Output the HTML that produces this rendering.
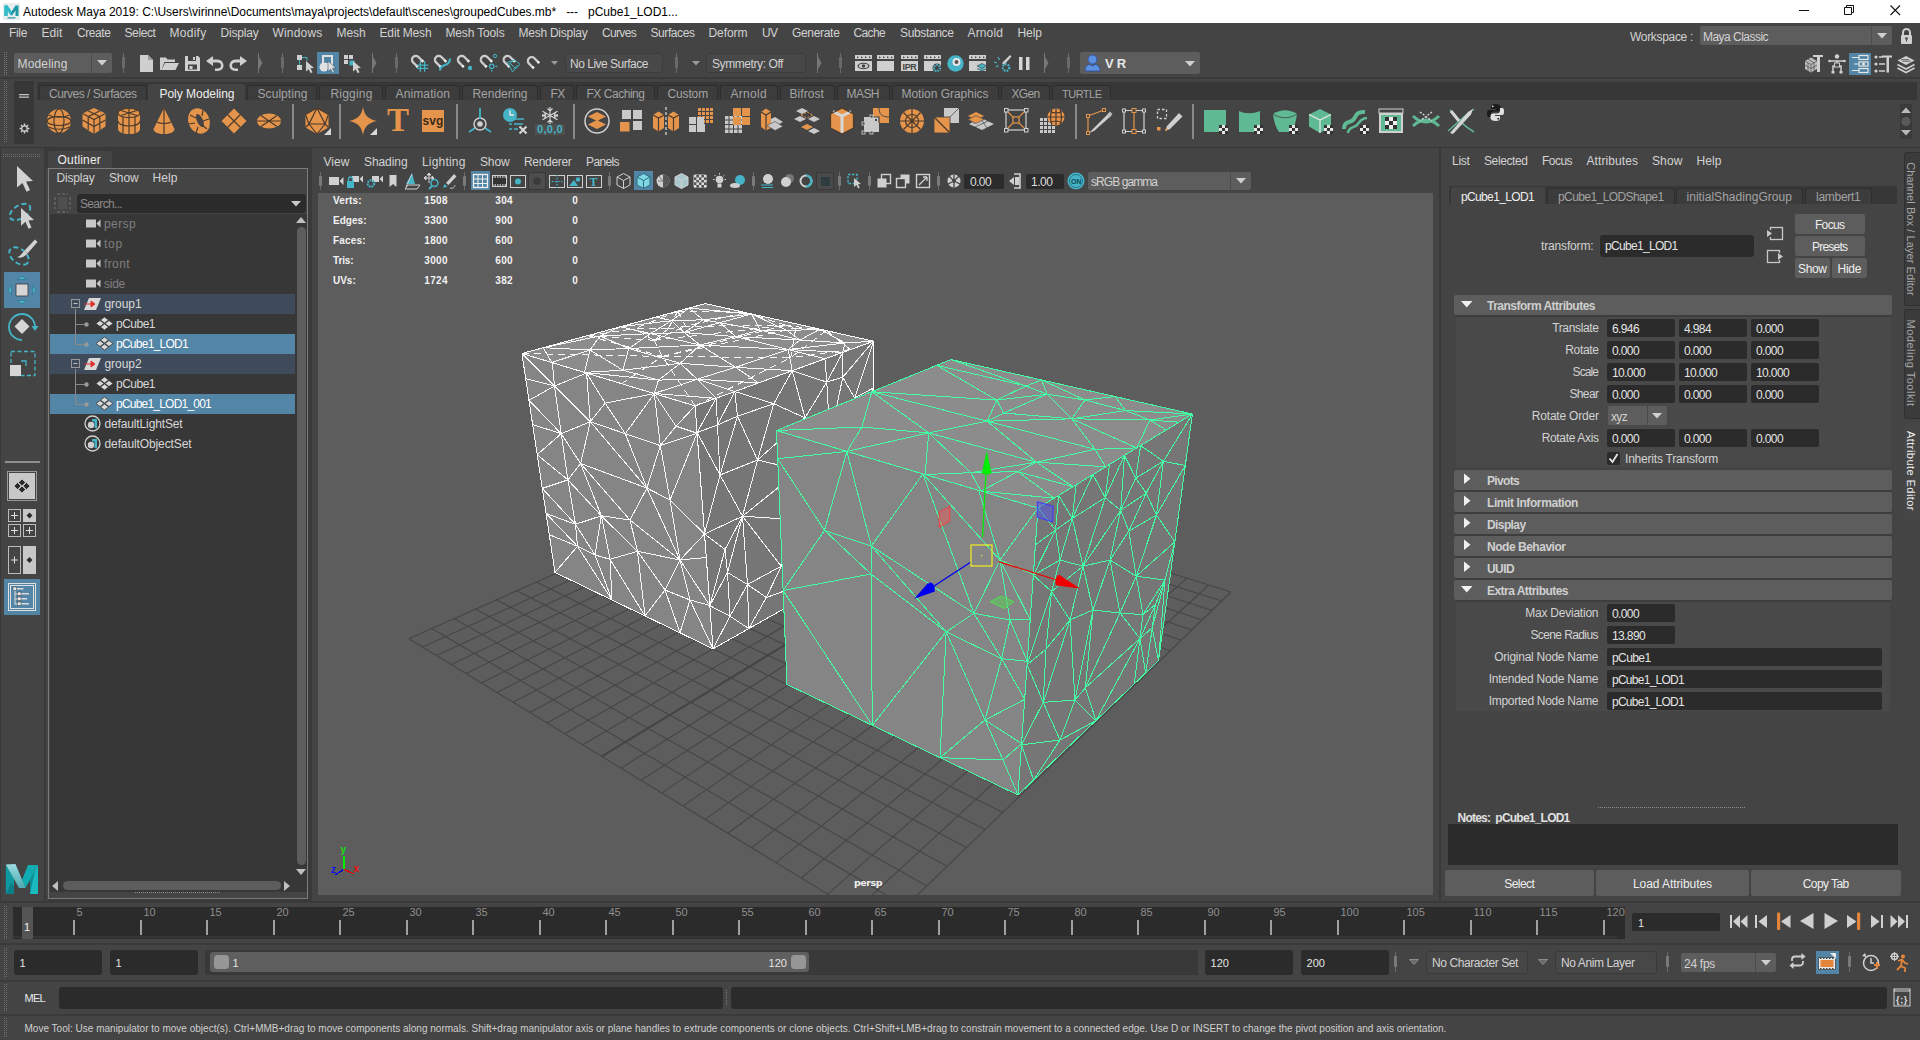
<!DOCTYPE html>
<html><head><meta charset="utf-8"><title>Autodesk Maya 2019</title>
<style>
html,body{margin:0;padding:0;}
body{width:1920px;height:1040px;overflow:hidden;background:#444444;position:relative;font-family:"Liberation Sans", sans-serif;font-size:12px;}
div,span,svg{position:absolute;box-sizing:border-box;}
svg{overflow:visible;}
</style></head><body>
<div style="left:0px;top:0px;width:1920px;height:23px;background:#ffffff;"></div>
<svg style="left:3px;top:3px;" width="17" height="17" viewBox="0 0 17 17"><rect x="0" y="0" width="17" height="17" fill="#e6eef0"/>
<path d="M1.5 13V2.5h3l4 6.2 4-6.2h3V13h-3V7.6l-3.2 4.6h-1.6L4.5 7.6V13z" fill="#1f98a4"/>
<path d="M1.5 13V2.5h3l4 6.2v3.5h-.8L4.5 7.6V13z" fill="#2fbccb"/>
<rect x="4.5" y="14" width="8" height="1.6" fill="#5fa9b3"/></svg>
<span style="top:4.00px;font-size:12px;line-height:16px;color:#000000;white-space:pre;letter-spacing:-0.012px;left:23px;">Autodesk Maya 2019: C:\Users\virinne\Documents\maya\projects\default\scenes\groupedCubes.mb*   ---   pCube1_LOD1...</span>
<svg style="left:1795px;top:0px;" width="120" height="23" viewBox="0 0 120 23"><path d="M4 10.5h10" stroke="#111" stroke-width="1" fill="none"/>
<path d="M49.5 7.5h7v7h-7z M51.5 7.5v-2h7v7h-2" stroke="#111" stroke-width="1" fill="none"/>
<path d="M95.5 5.5l9.5 9.5M105 5.5l-9.5 9.5" stroke="#111" stroke-width="1.1" fill="none"/></svg>
<div style="left:0px;top:23px;width:1920px;height:24px;background:#444444;"></div>
<span style="top:25.00px;font-size:12px;line-height:16px;color:#d2d2d2;white-space:pre;letter-spacing:-0.336px;left:9.0px;">File</span>
<span style="top:25.00px;font-size:12px;line-height:16px;color:#d2d2d2;white-space:pre;letter-spacing:0.078px;left:41.5px;">Edit</span>
<span style="top:25.00px;font-size:12px;line-height:16px;color:#d2d2d2;white-space:pre;letter-spacing:-0.422px;left:77.0px;">Create</span>
<span style="top:25.00px;font-size:12px;line-height:16px;color:#d2d2d2;white-space:pre;letter-spacing:-0.393px;left:124.5px;">Select</span>
<span style="top:25.00px;font-size:12px;line-height:16px;color:#d2d2d2;white-space:pre;letter-spacing:0.276px;left:169.5px;">Modify</span>
<span style="top:25.00px;font-size:12px;line-height:16px;color:#d2d2d2;white-space:pre;letter-spacing:-0.194px;left:220.5px;">Display</span>
<span style="top:25.00px;font-size:12px;line-height:16px;color:#d2d2d2;white-space:pre;letter-spacing:0.188px;left:272.5px;">Windows</span>
<span style="top:25.00px;font-size:12px;line-height:16px;color:#d2d2d2;white-space:pre;letter-spacing:-0.086px;left:336.5px;">Mesh</span>
<span style="top:25.00px;font-size:12px;line-height:16px;color:#d2d2d2;white-space:pre;letter-spacing:-0.151px;left:379.5px;">Edit Mesh</span>
<span style="top:25.00px;font-size:12px;line-height:16px;color:#d2d2d2;white-space:pre;letter-spacing:-0.148px;left:445.5px;">Mesh Tools</span>
<span style="top:25.00px;font-size:12px;line-height:16px;color:#d2d2d2;white-space:pre;letter-spacing:-0.253px;left:518.5px;">Mesh Display</span>
<span style="top:25.00px;font-size:12px;line-height:16px;color:#d2d2d2;white-space:pre;letter-spacing:-0.669px;left:602.0px;">Curves</span>
<span style="top:25.00px;font-size:12px;line-height:16px;color:#d2d2d2;white-space:pre;letter-spacing:-0.420px;left:650.5px;">Surfaces</span>
<span style="top:25.00px;font-size:12px;line-height:16px;color:#d2d2d2;white-space:pre;letter-spacing:-0.057px;left:708.5px;">Deform</span>
<span style="top:25.00px;font-size:12px;line-height:16px;color:#d2d2d2;white-space:pre;letter-spacing:-0.586px;left:762.0px;">UV</span>
<span style="top:25.00px;font-size:12px;line-height:16px;color:#d2d2d2;white-space:pre;letter-spacing:-0.318px;left:792.0px;">Generate</span>
<span style="top:25.00px;font-size:12px;line-height:16px;color:#d2d2d2;white-space:pre;letter-spacing:-0.637px;left:853.5px;">Cache</span>
<span style="top:25.00px;font-size:12px;line-height:16px;color:#d2d2d2;white-space:pre;letter-spacing:-0.358px;left:900.0px;">Substance</span>
<span style="top:25.00px;font-size:12px;line-height:16px;color:#d2d2d2;white-space:pre;letter-spacing:0.135px;left:967.5px;">Arnold</span>
<span style="top:25.00px;font-size:12px;line-height:16px;color:#d2d2d2;white-space:pre;letter-spacing:-0.047px;left:1017.5px;">Help</span>
<span style="top:29.00px;font-size:12px;line-height:16px;color:#d2d2d2;white-space:pre;letter-spacing:-0.315px;left:1630px;">Workspace :</span>
<div style="left:1700px;top:26px;width:192px;height:19px;background:#5d5d5d;border-radius:2px;"></div>
<div style="left:1871px;top:26px;width:1px;height:19px;background:#4f4f4f;"></div>
<span style="top:29.00px;font-size:12px;line-height:16px;color:#d2d2d2;white-space:pre;letter-spacing:-0.530px;left:1703px;">Maya Classic</span>
<svg style="left:1877px;top:33px;" width="10" height="6" viewBox="0 0 10 6"><path d="M0 0h10l-5 5.5z" fill="#d0d0d0"/></svg>
<svg style="left:1900px;top:28px;" width="13" height="17" viewBox="0 0 13 17"><path d="M3 7V4.5a3.5 3.5 0 0 1 7 0V7" stroke="#cfcfcf" stroke-width="2" fill="none"/><rect x="1" y="7" width="11" height="9" rx="1" fill="#cfcfcf"/><circle cx="6.5" cy="10.5" r="1.3" fill="#444"/><rect x="6" y="10.5" width="1" height="3" fill="#444"/></svg>
<div style="left:0px;top:47px;width:1920px;height:31px;background:#444444;"></div>
<div style="left:0px;top:77px;width:1920px;height:2px;background:#3a3a3a;"></div>
<svg style="left:4px;top:52px;" width="4" height="24" viewBox="0 0 4 24"><rect x="0" y="0" width="1" height="1" fill="#7a7a7a"/><rect x="0" y="2" width="1" height="1" fill="#7a7a7a"/><rect x="0" y="4" width="1" height="1" fill="#7a7a7a"/><rect x="0" y="6" width="1" height="1" fill="#7a7a7a"/><rect x="0" y="8" width="1" height="1" fill="#7a7a7a"/><rect x="0" y="10" width="1" height="1" fill="#7a7a7a"/><rect x="0" y="12" width="1" height="1" fill="#7a7a7a"/><rect x="0" y="14" width="1" height="1" fill="#7a7a7a"/><rect x="0" y="16" width="1" height="1" fill="#7a7a7a"/><rect x="0" y="18" width="1" height="1" fill="#7a7a7a"/><rect x="0" y="20" width="1" height="1" fill="#7a7a7a"/><rect x="0" y="22" width="1" height="1" fill="#7a7a7a"/><rect x="2" y="0" width="1" height="1" fill="#7a7a7a"/><rect x="2" y="2" width="1" height="1" fill="#7a7a7a"/><rect x="2" y="4" width="1" height="1" fill="#7a7a7a"/><rect x="2" y="6" width="1" height="1" fill="#7a7a7a"/><rect x="2" y="8" width="1" height="1" fill="#7a7a7a"/><rect x="2" y="10" width="1" height="1" fill="#7a7a7a"/><rect x="2" y="12" width="1" height="1" fill="#7a7a7a"/><rect x="2" y="14" width="1" height="1" fill="#7a7a7a"/><rect x="2" y="16" width="1" height="1" fill="#7a7a7a"/><rect x="2" y="18" width="1" height="1" fill="#7a7a7a"/><rect x="2" y="20" width="1" height="1" fill="#7a7a7a"/><rect x="2" y="22" width="1" height="1" fill="#7a7a7a"/></svg>
<div style="left:14px;top:53px;width:98px;height:20px;background:#5d5d5d;border-radius:2px;"></div>
<div style="left:91px;top:53px;width:1px;height:20px;background:#4c4c4c;"></div>
<span style="top:56.00px;font-size:12px;line-height:16px;color:#d2d2d2;white-space:pre;letter-spacing:0.162px;left:17.5px;">Modeling</span>
<svg style="left:97px;top:60px;" width="10" height="6" viewBox="0 0 10 6"><path d="M0 0h10l-5 5.5z" fill="#d0d0d0"/></svg>
<svg style="left:121px;top:53px;" width="5" height="20" viewBox="0 0 5 20"><rect x="2" y="0" width="1" height="20" fill="#6a6a6a"/><rect x="1" y="4" width="3" height="11" rx="1" fill="#6a6a6a"/></svg>
<svg style="left:139px;top:55px;" width="15" height="17" viewBox="0 0 15 17"><path d="M1 0h8l5 5v12H1z" fill="#cfcfcf"/><path d="M9 0v5h5" fill="#9a9a9a"/></svg>
<svg style="left:160px;top:56px;" width="19" height="15" viewBox="0 0 19 15"><path d="M0 14V1.5h6l1.5 2H15V6H4.5L1.5 14z" fill="#cfcfcf"/><path d="M5 7h14l-3.5 7H1.5z" fill="#cfcfcf"/></svg>
<svg style="left:185px;top:56px;" width="15" height="15" viewBox="0 0 15 15"><path d="M0 0h13l2 2v13H0z" fill="#cfcfcf"/><rect x="3" y="0" width="8" height="5" fill="#444"/><rect x="8" y="1" width="2" height="3" fill="#cfcfcf"/><rect x="3" y="8.5" width="9" height="5" fill="#444"/><rect x="4.5" y="10" width="3" height="3" fill="#cfcfcf"/></svg>
<svg style="left:206px;top:56px;" width="18" height="15" viewBox="0 0 18 15"><path d="M7 0L0 5l7 5V6.6h4.5c2 0 3.5 1 3.5 3s-1.5 3-3.5 3H9v2.4h2.5c3.5 0 6-2 6-5.4S15 3.400 11.5 3.400H7z" fill="#cfcfcf"/></svg>
<svg style="left:229px;top:56px;" width="18" height="15" viewBox="0 0 18 15"><g transform="translate(18,0) scale(-1,1)"><path d="M7 0L0 5l7 5V6.6h4.5c2 0 3.5 1 3.5 3s-1.5 3-3.5 3H9v2.4h2.5c3.500 0 6-2 6-5.400S15 3.400 11.5 3.400H7z" fill="#cfcfcf"/></g></svg>
<svg style="left:258px;top:53px;" width="5" height="20" viewBox="0 0 5 20"><path d="M0.5 0v20M0.5 4l3.5 6-3.5 6z" stroke="#777" stroke-width="1" fill="#777"/></svg>
<svg style="left:280px;top:53px;" width="5" height="20" viewBox="0 0 5 20"><rect x="2" y="0" width="1" height="20" fill="#6a6a6a"/><rect x="1" y="4" width="3" height="11" rx="1" fill="#6a6a6a"/></svg>
<svg style="left:296px;top:54px;" width="20" height="20" viewBox="0 0 20 20"><rect x="1" y="1" width="5" height="5" fill="#cfcfcf"/><rect x="1" y="11" width="5" height="5" fill="#cfcfcf"/><path d="M3.500 6v5M6 3.500h5v3" stroke="#45b4c7" stroke-width="1" fill="none"/><path d="M10 7l8 7-3.500.3 2 4-1.800.9-2-4L10 17.500z" fill="#cfcfcf"/></svg>
<div style="left:317px;top:52px;width:22px;height:22px;background:#5285a6;"></div>
<svg style="left:318px;top:54px;" width="20" height="20" viewBox="0 0 20 20"><circle cx="6" cy="13" r="4.500" fill="#e0e0e0"/><rect x="5" y="2" width="9" height="8" fill="none" stroke="#e0e0e0" stroke-width="2"/><path d="M10 7l8 7-3.500.3 2 4-1.800.9-2-4L10 17.500z" fill="#e0e0e0" stroke="#3a5a70" stroke-width=".6"/></svg>
<svg style="left:343px;top:54px;" width="20" height="20" viewBox="0 0 20 20"><rect x="1" y="1" width="4" height="4" fill="#cfcfcf"/><rect x="6" y="1" width="4" height="4" fill="#cfcfcf"/><rect x="1" y="6" width="4" height="4" fill="#cfcfcf"/><rect x="6.500" y="6.500" width="5" height="5" fill="#45b4c7"/><path d="M10 7l8 7-3.500.3 2 4-1.800.9-2-4L10 17.500z" fill="#cfcfcf"/></svg>
<svg style="left:372px;top:53px;" width="5" height="20" viewBox="0 0 5 20"><path d="M0.5 0v20M0.5 4l3.5 6-3.5 6z" stroke="#777" stroke-width="1" fill="#777"/></svg>
<svg style="left:394px;top:53px;" width="5" height="20" viewBox="0 0 5 20"><rect x="2" y="0" width="1" height="20" fill="#6a6a6a"/><rect x="1" y="4" width="3" height="11" rx="1" fill="#6a6a6a"/></svg>
<svg style="left:0;top:0;" width="600" height="80" viewBox="0 0 600 80"><g transform="translate(415.8 59.7) rotate(-45)"><path d="M-3.8 5.8V0A3.8 3.8 0 0 1 3.8 0V5.8" fill="none" stroke="#cdcdcd" stroke-width="2.300"/><rect x="-5.05" y="4.8" width="2.500" height="2" fill="#f4f4f4"/><rect x="2.55" y="4.8" width="2.500" height="2" fill="#f4f4f4"/></g><path d="M420.400 61v10.800M424.600 61v10.800M417 65.100h11.300M417 68.400h11.300" stroke="#45b4c7" stroke-width="1.300" fill="none"/><g transform="translate(438.75 59.7) rotate(-45)"><path d="M-3.8 5.8V0A3.8 3.8 0 0 1 3.8 0V5.8" fill="none" stroke="#cdcdcd" stroke-width="2.300"/><rect x="-5.05" y="4.8" width="2.500" height="2" fill="#f4f4f4"/><rect x="2.55" y="4.8" width="2.500" height="2" fill="#f4f4f4"/></g><path d="M450 58.500c0 4-1.500 5.500-5 6.500s-5 3-5 5.500" stroke="#45b4c7" stroke-width="2.200" fill="none"/><g transform="translate(461.7 59.7) rotate(-45)"><path d="M-3.8 5.8V0A3.8 3.8 0 0 1 3.8 0V5.8" fill="none" stroke="#cdcdcd" stroke-width="2.300"/><rect x="-5.05" y="4.8" width="2.500" height="2" fill="#f4f4f4"/><rect x="2.55" y="4.8" width="2.500" height="2" fill="#f4f4f4"/></g><circle cx="470" cy="68" r="2.200" fill="#45b4c7"/><g transform="translate(484.6 59.7) rotate(-45)"><path d="M-3.8 5.8V0A3.8 3.8 0 0 1 3.8 0V5.8" fill="none" stroke="#cdcdcd" stroke-width="2.300"/><rect x="-5.05" y="4.8" width="2.500" height="2" fill="#f4f4f4"/><rect x="2.55" y="4.8" width="2.500" height="2" fill="#f4f4f4"/></g><circle cx="491.700" cy="66.300" r="2.200" fill="none" stroke="#45b4c7" stroke-width="1.200"/><circle cx="495" cy="56" r="1.600" fill="none" stroke="#45b4c7" stroke-width="1"/><path d="M495.300 66.300h2M491.700 69.800v2" stroke="#45b4c7" stroke-width="1.200"/><g transform="translate(507.5 59.7) rotate(-45)"><path d="M-3.8 5.8V0A3.8 3.8 0 0 1 3.8 0V5.8" fill="none" stroke="#cdcdcd" stroke-width="2.300"/><rect x="-5.05" y="4.8" width="2.500" height="2" fill="#f4f4f4"/><rect x="2.55" y="4.8" width="2.500" height="2" fill="#f4f4f4"/></g><path d="M507.500 62.200l7.500-2.100 5 4.200-7.500 7.500z" fill="none" stroke="#45b4c7" stroke-width="1"/><path d="M510 63l5.500 5.500M513 60.500l-4 4M517.500 65l-4 4" stroke="#45b4c7" stroke-width="1"/><g transform="translate(531.7 60.9) rotate(-45)"><path d="M-3.8 5.8V0A3.8 3.8 0 0 1 3.8 0V5.8" fill="none" stroke="#cdcdcd" stroke-width="2.300"/><rect x="-5.05" y="4.8" width="2.500" height="2" fill="#f4f4f4"/><rect x="2.55" y="4.8" width="2.500" height="2" fill="#f4f4f4"/></g></svg>
<svg style="left:551px;top:61px;" width="8" height="5" viewBox="0 0 8 5"><path d="M0 0h7l-3.500 4z" fill="#9a9a9a"/></svg>
<div style="left:565px;top:53px;width:98px;height:20px;background:#484848;border:1px solid #3c3c3c;border-radius:3px;"></div>
<span style="top:56.00px;font-size:12px;line-height:16px;color:#d2d2d2;white-space:pre;letter-spacing:-0.493px;left:570px;">No Live Surface</span>
<svg style="left:674px;top:53px;" width="5" height="20" viewBox="0 0 5 20"><rect x="2" y="0" width="1" height="20" fill="#6a6a6a"/><rect x="1" y="4" width="3" height="11" rx="1" fill="#6a6a6a"/></svg>
<svg style="left:692px;top:61px;" width="8" height="5" viewBox="0 0 8 5"><path d="M0 0h8l-4 4.500z" fill="#9a9a9a"/></svg>
<div style="left:706px;top:53px;width:100px;height:20px;background:#484848;border:1px solid #3c3c3c;border-radius:3px;"></div>
<span style="top:56.00px;font-size:12px;line-height:16px;color:#d2d2d2;white-space:pre;letter-spacing:-0.419px;left:712px;">Symmetry: Off</span>
<svg style="left:817px;top:53px;" width="5" height="20" viewBox="0 0 5 20"><path d="M0.5 0v20M0.5 4l3.5 6-3.5 6z" stroke="#777" stroke-width="1" fill="#777"/></svg>
<svg style="left:838px;top:53px;" width="5" height="20" viewBox="0 0 5 20"><rect x="2" y="0" width="1" height="20" fill="#6a6a6a"/><rect x="1" y="4" width="3" height="11" rx="1" fill="#6a6a6a"/></svg>
<svg style="left:855px;top:55px;" width="17" height="17" viewBox="0 0 17 17"><path d="M0 0h17v4H0z" fill="#cfcfcf"/><path d="M2 1.200l2 1-2 1z" fill="#444"/><path d="M6 1.200l2 1-2 1z" fill="#444"/><path d="M10 1.200l2 1-2 1z" fill="#444"/><path d="M14 1.200l2 1-2 1z" fill="#444"/><rect x="0" y="6" width="17" height="10" fill="#cfcfcf"/><ellipse cx="8.500" cy="11" rx="6" ry="3.300" fill="#444"/><ellipse cx="8.500" cy="11" rx="4.600" ry="2.200" fill="#cfcfcf"/><circle cx="8.500" cy="11" r="1.800" fill="#444"/></svg>
<svg style="left:877px;top:55px;" width="17" height="17" viewBox="0 0 17 17"><path d="M0 0h17v4H0z" fill="#cfcfcf"/><path d="M2 1.200l2 1-2 1z" fill="#444"/><path d="M6 1.200l2 1-2 1z" fill="#444"/><path d="M10 1.200l2 1-2 1z" fill="#444"/><path d="M14 1.200l2 1-2 1z" fill="#444"/><rect x="0" y="6" width="17" height="10" fill="#cfcfcf"/></svg>
<svg style="left:901px;top:55px;" width="17" height="17" viewBox="0 0 17 17"><path d="M0 0h17v4H0z" fill="#cfcfcf"/><path d="M2 1.200l2 1-2 1z" fill="#444"/><path d="M6 1.200l2 1-2 1z" fill="#444"/><path d="M10 1.200l2 1-2 1z" fill="#444"/><path d="M14 1.200l2 1-2 1z" fill="#444"/><rect x="0" y="6" width="17" height="10" fill="#cfcfcf"/></svg>
<span style="top:61.00px;font-size:9px;line-height:12px;color:#444444;white-space:pre;font-weight:bold;letter-spacing:-0.339px;left:902.5px;">IPR</span>
<svg style="left:924px;top:55px;" width="17" height="17" viewBox="0 0 17 17"><path d="M0 0h17v4H0z" fill="#cfcfcf"/><path d="M2 1.200l2 1-2 1z" fill="#444"/><path d="M6 1.200l2 1-2 1z" fill="#444"/><path d="M10 1.200l2 1-2 1z" fill="#444"/><path d="M14 1.200l2 1-2 1z" fill="#444"/><rect x="0" y="6" width="17" height="10" fill="#cfcfcf"/><circle cx="13" cy="13" r="4.500" fill="#444"/><circle cx="13" cy="13" r="3" fill="none" stroke="#45b4c7" stroke-width="2" stroke-dasharray="1.600 1"/></svg>
<svg style="left:947px;top:55px;" width="17" height="17" viewBox="0 0 17 17"><circle cx="8.500" cy="8.500" r="8.200" fill="#45b4c7"/><circle cx="9.500" cy="7" r="4" fill="#e8e8e8"/><circle cx="9.500" cy="7" r="2" fill="#555"/></svg>
<svg style="left:969px;top:55px;" width="17" height="17" viewBox="0 0 17 17"><path d="M0 0h17v4H0z" fill="#cfcfcf"/><path d="M2 1.200l2 1-2 1z" fill="#444"/><path d="M6 1.200l2 1-2 1z" fill="#444"/><path d="M10 1.200l2 1-2 1z" fill="#444"/><path d="M14 1.200l2 1-2 1z" fill="#444"/><rect x="0" y="6" width="17" height="10" fill="#cfcfcf"/><path d="M8 11l5-2.500 5 2.500-5 2.500z M8 13.500l5 2.500 5-2.500" fill="#45b4c7" stroke="#444" stroke-width=".7"/></svg>
<svg style="left:993px;top:54px;" width="19" height="19" viewBox="0 0 19 19"><path d="M9 9L17 1l1.500 1.500L11 11z" fill="#cfcfcf"/><path d="M1 8l3 1M3 13l2.500-1.500M5 3l1.500 3" stroke="#45b4c7" stroke-width="1.200"/><circle cx="13" cy="13.500" r="3.300" fill="none" stroke="#45b4c7" stroke-width="2.200" stroke-dasharray="1.800 1"/></svg>
<svg style="left:1019px;top:57px;" width="11" height="13" viewBox="0 0 11 13"><rect x="0" y="0" width="3.500" height="13" fill="#d6d6d6"/><rect x="7" y="0" width="3.500" height="13" fill="#d6d6d6"/></svg>
<svg style="left:1044px;top:53px;" width="5" height="20" viewBox="0 0 5 20"><path d="M0.5 0v20M0.5 4l3.5 6-3.5 6z" stroke="#777" stroke-width="1" fill="#777"/></svg>
<svg style="left:1066px;top:53px;" width="5" height="20" viewBox="0 0 5 20"><rect x="2" y="0" width="1" height="20" fill="#6a6a6a"/><rect x="1" y="4" width="3" height="11" rx="1" fill="#6a6a6a"/></svg>
<div style="left:1080px;top:52px;width:120px;height:22px;background:#5d5d5d;border-radius:2px;"></div>
<svg style="left:1084px;top:54px;" width="17" height="18" viewBox="0 0 17 18"><circle cx="8.500" cy="5.500" r="4.500" fill="#5b8fe0" stroke="#2c4f9c" stroke-width=".8"/><path d="M1 17c0-5 3-6.500 5-6.500l2.500 1.500L11 10.500c2 0 5 1.500 5 6.500z" fill="#5b8fe0" stroke="#2c4f9c" stroke-width=".8"/></svg>
<span style="top:55.00px;font-size:13px;line-height:17px;color:#e8e8e8;white-space:pre;font-weight:bold;letter-spacing:-0.224px;left:1105px;">V R</span>
<svg style="left:1185px;top:61px;" width="10" height="6" viewBox="0 0 10 6"><path d="M0 0h10l-5 5.500z" fill="#d0d0d0"/></svg>
<svg style="left:1804px;top:54px;" width="20" height="20" viewBox="0 0 20 20"><path d="M1 7l6-3.500 6 3.500v8l-6 3.500-6-3.500z" fill="#bdbdbd"/><path d="M1 7l6 3.500 6-3.500M7 10.500v8M4 5.200l6 3.500M4 8.800v8M10 8.800v8M1 11l6 3.500 6-3.500" stroke="#555" stroke-width=".8" fill="none"/><path d="M9 1h10v2l-3 0v15h-3V3H9z" fill="#d0d0d0"/></svg>
<svg style="left:1828px;top:54px;" width="18" height="20" viewBox="0 0 18 20"><circle cx="9" cy="2.500" r="2.200" fill="#d0d0d0"/><path d="M2 7h14M9 7v6M5 18v-6h8v6" stroke="#d0d0d0" stroke-width="1.500" fill="none"/><circle cx="1.500" cy="7" r="1.300" fill="#d0d0d0"/><circle cx="16.500" cy="7" r="1.300" fill="#d0d0d0"/><rect x="3.500" y="17" width="3" height="2.500" fill="#d0d0d0"/><rect x="11.500" y="17" width="3" height="2.500" fill="#d0d0d0"/><rect x="6.500" y="9" width="5" height="4" fill="#444" stroke="#d0d0d0"/></svg>
<div style="left:1849px;top:53px;width:22px;height:22px;background:#5285a6;"></div>
<svg style="left:1850px;top:54px;" width="20" height="20" viewBox="0 0 20 20"><rect x="9" y="1.500" width="9" height="4" fill="none" stroke="#e6e6e6" stroke-width="1.200"/><rect x="9" y="8" width="9" height="4" fill="none" stroke="#e6e6e6" stroke-width="1.200"/><rect x="9" y="14.500" width="9" height="4" fill="none" stroke="#e6e6e6" stroke-width="1.200"/><path d="M2 3.500h7M4 10h5M2 16.500h7" stroke="#e6e6e6" stroke-width="1.200"/><circle cx="13.500" cy="10" r="1.500" fill="#e6e6e6"/></svg>
<svg style="left:1874px;top:54px;" width="19" height="20" viewBox="0 0 19 20"><circle cx="2" cy="3" r="1.600" fill="#d0d0d0"/><circle cx="2" cy="10" r="1.600" fill="#d0d0d0"/><circle cx="2" cy="17" r="1.600" fill="#d0d0d0"/><path d="M5 3h4M5 10h6M5 17h6" stroke="#d0d0d0" stroke-width="1.300"/><path d="M8 1.500h10v2h-3v15h-2.500v-15H8z" fill="#d0d0d0"/></svg>
<svg style="left:1897px;top:56px;" width="18" height="18" viewBox="0 0 18 18"><path d="M9 0l8.500 4.500L9 9 .5 4.500z" fill="#d0d0d0"/><path d="M4 3.700h8M5.500 5.200h8" stroke="#444" stroke-width=".8"/><path d="M.5 8.500L9 13l8.500-4.500M.5 12L9 16.500 17.500 12" stroke="#d0d0d0" stroke-width="1.600" fill="none"/></svg>
<div style="left:0px;top:79px;width:1920px;height:68px;background:#444444;"></div>
<div style="left:0px;top:147px;width:1920px;height:2px;background:#383838;"></div>
<svg style="left:4px;top:81px;" width="4" height="62" viewBox="0 0 4 62"><rect x="0" y="0" width="1" height="1" fill="#6f6f6f"/><rect x="0" y="2" width="1" height="1" fill="#6f6f6f"/><rect x="0" y="4" width="1" height="1" fill="#6f6f6f"/><rect x="0" y="6" width="1" height="1" fill="#6f6f6f"/><rect x="0" y="8" width="1" height="1" fill="#6f6f6f"/><rect x="0" y="10" width="1" height="1" fill="#6f6f6f"/><rect x="0" y="12" width="1" height="1" fill="#6f6f6f"/><rect x="0" y="14" width="1" height="1" fill="#6f6f6f"/><rect x="0" y="16" width="1" height="1" fill="#6f6f6f"/><rect x="0" y="18" width="1" height="1" fill="#6f6f6f"/><rect x="0" y="20" width="1" height="1" fill="#6f6f6f"/><rect x="0" y="22" width="1" height="1" fill="#6f6f6f"/><rect x="0" y="24" width="1" height="1" fill="#6f6f6f"/><rect x="0" y="26" width="1" height="1" fill="#6f6f6f"/><rect x="0" y="28" width="1" height="1" fill="#6f6f6f"/><rect x="0" y="30" width="1" height="1" fill="#6f6f6f"/><rect x="0" y="32" width="1" height="1" fill="#6f6f6f"/><rect x="0" y="34" width="1" height="1" fill="#6f6f6f"/><rect x="0" y="36" width="1" height="1" fill="#6f6f6f"/><rect x="0" y="38" width="1" height="1" fill="#6f6f6f"/><rect x="0" y="40" width="1" height="1" fill="#6f6f6f"/><rect x="0" y="42" width="1" height="1" fill="#6f6f6f"/><rect x="0" y="44" width="1" height="1" fill="#6f6f6f"/><rect x="0" y="46" width="1" height="1" fill="#6f6f6f"/><rect x="0" y="48" width="1" height="1" fill="#6f6f6f"/><rect x="0" y="50" width="1" height="1" fill="#6f6f6f"/><rect x="0" y="52" width="1" height="1" fill="#6f6f6f"/><rect x="0" y="54" width="1" height="1" fill="#6f6f6f"/><rect x="0" y="56" width="1" height="1" fill="#6f6f6f"/><rect x="0" y="58" width="1" height="1" fill="#6f6f6f"/><rect x="0" y="60" width="1" height="1" fill="#6f6f6f"/><rect x="2" y="0" width="1" height="1" fill="#6f6f6f"/><rect x="2" y="2" width="1" height="1" fill="#6f6f6f"/><rect x="2" y="4" width="1" height="1" fill="#6f6f6f"/><rect x="2" y="6" width="1" height="1" fill="#6f6f6f"/><rect x="2" y="8" width="1" height="1" fill="#6f6f6f"/><rect x="2" y="10" width="1" height="1" fill="#6f6f6f"/><rect x="2" y="12" width="1" height="1" fill="#6f6f6f"/><rect x="2" y="14" width="1" height="1" fill="#6f6f6f"/><rect x="2" y="16" width="1" height="1" fill="#6f6f6f"/><rect x="2" y="18" width="1" height="1" fill="#6f6f6f"/><rect x="2" y="20" width="1" height="1" fill="#6f6f6f"/><rect x="2" y="22" width="1" height="1" fill="#6f6f6f"/><rect x="2" y="24" width="1" height="1" fill="#6f6f6f"/><rect x="2" y="26" width="1" height="1" fill="#6f6f6f"/><rect x="2" y="28" width="1" height="1" fill="#6f6f6f"/><rect x="2" y="30" width="1" height="1" fill="#6f6f6f"/><rect x="2" y="32" width="1" height="1" fill="#6f6f6f"/><rect x="2" y="34" width="1" height="1" fill="#6f6f6f"/><rect x="2" y="36" width="1" height="1" fill="#6f6f6f"/><rect x="2" y="38" width="1" height="1" fill="#6f6f6f"/><rect x="2" y="40" width="1" height="1" fill="#6f6f6f"/><rect x="2" y="42" width="1" height="1" fill="#6f6f6f"/><rect x="2" y="44" width="1" height="1" fill="#6f6f6f"/><rect x="2" y="46" width="1" height="1" fill="#6f6f6f"/><rect x="2" y="48" width="1" height="1" fill="#6f6f6f"/><rect x="2" y="50" width="1" height="1" fill="#6f6f6f"/><rect x="2" y="52" width="1" height="1" fill="#6f6f6f"/><rect x="2" y="54" width="1" height="1" fill="#6f6f6f"/><rect x="2" y="56" width="1" height="1" fill="#6f6f6f"/><rect x="2" y="58" width="1" height="1" fill="#6f6f6f"/><rect x="2" y="60" width="1" height="1" fill="#6f6f6f"/></svg>
<div style="left:14px;top:81px;width:20px;height:63px;background:#373737;"></div>
<svg style="left:19px;top:94px;" width="10" height="4" viewBox="0 0 10 4"><rect x="0" y="0" width="10" height="1.300" fill="#bdbdbd"/><rect x="0" y="2.500" width="10" height="1.300" fill="#bdbdbd"/></svg>
<svg style="left:19px;top:123px;" width="11" height="11" viewBox="0 0 11 11"><path d="M5.500 0.500v10M0.500 5.500h10M2 2l7 7M9 2L2 9" stroke="#cfcfcf" stroke-width="1.500"/><circle cx="5.500" cy="5.500" r="3.300" fill="#cfcfcf"/><circle cx="5.500" cy="5.500" r="2.100" fill="#373737"/></svg>
<div style="left:37px;top:82px;width:1880px;height:18px;background:#373737;"></div>
<div style="left:39px;top:85px;width:108px;height:15px;background:#3c3c3c;border:1px solid #2e2e2e;border-bottom:none;border-radius:3px 3px 0 0;"></div>
<span style="top:86.00px;font-size:12px;line-height:16px;color:#a3a3a3;white-space:pre;letter-spacing:-0.463px;left:49.0px;">Curves / Surfaces</span>
<div style="left:148px;top:84px;width:97px;height:17px;background:#444444;border-radius:3px 3px 0 0;"></div>
<span style="top:86.00px;font-size:12px;line-height:16px;color:#eeeeee;white-space:pre;letter-spacing:-0.029px;left:159.5px;">Poly Modeling</span>
<div style="left:247px;top:85px;width:70px;height:15px;background:#3c3c3c;border:1px solid #2e2e2e;border-bottom:none;border-radius:3px 3px 0 0;"></div>
<span style="top:86.00px;font-size:12px;line-height:16px;color:#a3a3a3;white-space:pre;letter-spacing:0.069px;left:257.5px;">Sculpting</span>
<div style="left:319px;top:85px;width:64px;height:15px;background:#3c3c3c;border:1px solid #2e2e2e;border-bottom:none;border-radius:3px 3px 0 0;"></div>
<span style="top:86.00px;font-size:12px;line-height:16px;color:#a3a3a3;white-space:pre;letter-spacing:0.185px;left:330.5px;">Rigging</span>
<div style="left:385px;top:85px;width:75px;height:15px;background:#3c3c3c;border:1px solid #2e2e2e;border-bottom:none;border-radius:3px 3px 0 0;"></div>
<span style="top:86.00px;font-size:12px;line-height:16px;color:#a3a3a3;white-space:pre;letter-spacing:0.125px;left:395.5px;">Animation</span>
<div style="left:462px;top:85px;width:76px;height:15px;background:#3c3c3c;border:1px solid #2e2e2e;border-bottom:none;border-radius:3px 3px 0 0;"></div>
<span style="top:86.00px;font-size:12px;line-height:16px;color:#a3a3a3;white-space:pre;letter-spacing:-0.042px;left:472.5px;">Rendering</span>
<div style="left:540px;top:85px;width:34px;height:15px;background:#3c3c3c;border:1px solid #2e2e2e;border-bottom:none;border-radius:3px 3px 0 0;"></div>
<span style="top:86.00px;font-size:12px;line-height:16px;color:#a3a3a3;white-space:pre;letter-spacing:-0.672px;left:550.5px;">FX</span>
<div style="left:576px;top:85px;width:79px;height:15px;background:#3c3c3c;border:1px solid #2e2e2e;border-bottom:none;border-radius:3px 3px 0 0;"></div>
<span style="top:86.00px;font-size:12px;line-height:16px;color:#a3a3a3;white-space:pre;letter-spacing:-0.470px;left:586.5px;">FX Caching</span>
<div style="left:657px;top:85px;width:61px;height:15px;background:#3c3c3c;border:1px solid #2e2e2e;border-bottom:none;border-radius:3px 3px 0 0;"></div>
<span style="top:86.00px;font-size:12px;line-height:16px;color:#a3a3a3;white-space:pre;letter-spacing:-0.141px;left:667.5px;">Custom</span>
<div style="left:720px;top:85px;width:58px;height:15px;background:#3c3c3c;border:1px solid #2e2e2e;border-bottom:none;border-radius:3px 3px 0 0;"></div>
<span style="top:86.00px;font-size:12px;line-height:16px;color:#a3a3a3;white-space:pre;letter-spacing:0.302px;left:730.5px;">Arnold</span>
<div style="left:780px;top:85px;width:55px;height:15px;background:#3c3c3c;border:1px solid #2e2e2e;border-bottom:none;border-radius:3px 3px 0 0;"></div>
<span style="top:86.00px;font-size:12px;line-height:16px;color:#a3a3a3;white-space:pre;letter-spacing:0.069px;left:789.5px;">Bifrost</span>
<div style="left:837px;top:85px;width:53px;height:15px;background:#3c3c3c;border:1px solid #2e2e2e;border-bottom:none;border-radius:3px 3px 0 0;"></div>
<span style="top:86.00px;font-size:12px;line-height:16px;color:#a3a3a3;white-space:pre;letter-spacing:-0.543px;left:846.5px;">MASH</span>
<div style="left:892px;top:85px;width:107px;height:15px;background:#3c3c3c;border:1px solid #2e2e2e;border-bottom:none;border-radius:3px 3px 0 0;"></div>
<span style="top:86.00px;font-size:12px;line-height:16px;color:#a3a3a3;white-space:pre;letter-spacing:-0.025px;left:901.5px;">Motion Graphics</span>
<div style="left:1001px;top:85px;width:49px;height:15px;background:#3c3c3c;border:1px solid #2e2e2e;border-bottom:none;border-radius:3px 3px 0 0;"></div>
<span style="top:86.00px;font-size:12px;line-height:16px;color:#a3a3a3;white-space:pre;letter-spacing:-0.672px;left:1011.5px;">XGen</span>
<div style="left:1052px;top:85px;width:59px;height:15px;background:#3c3c3c;border:1px solid #2e2e2e;border-bottom:none;border-radius:3px 3px 0 0;"></div>
<span style="top:87.00px;font-size:11px;line-height:14px;color:#a3a3a3;white-space:pre;letter-spacing:-0.516px;left:1062.0px;">TURTLE</span>
<div style="left:1900px;top:104px;width:12px;height:35px;background:#3a3a3a;"></div>
<svg style="left:1901px;top:107px;" width="10" height="29" viewBox="0 0 10 29"><path d="M0 6l5-5.500 5 5.500z" fill="#b8b8b8"/><circle cx="5" cy="14.500" r="4.500" fill="#5a5a5a"/><path d="M0 23l5 5.500 5-5.500z" fill="#b8b8b8"/></svg>
<svg style="left:45px;top:107px;" width="28" height="28" viewBox="0 0 28 28"><circle cx="14" cy="14" r="12" fill="#e5954b"/><ellipse cx="14" cy="14" rx="12" ry="4.500" stroke="#4b3a2c" stroke-width="1.200" fill="none"/><ellipse cx="14" cy="14" rx="5" ry="12" stroke="#4b3a2c" stroke-width="1.200" fill="none"/><path d="M3.500 8c6 3 15 3 21 0M3.500 20c6 3 15 3 21 0" stroke="#4b3a2c" stroke-width="1.200" fill="none"/></svg>
<svg style="left:80px;top:107px;" width="28" height="28" viewBox="0 0 28 28"><path d="M14 1l11.500 5.500v13L14 27 2.500 19.500v-13z" fill="#e5954b"/><path d="M2.500 6.500L14 12.500l11.500-6M14 12.500V27M8 3.800l11.800 5.800V23M20 3.800L8.200 9.600V23M2.500 13l11.500 6.500L25.500 13" stroke="#4b3a2c" stroke-width="1.200" fill="none"/></svg>
<svg style="left:115px;top:107px;" width="28" height="28" viewBox="0 0 28 28"><path d="M3 6v16c0 3 5 5 11 5s11-2 11-5V6z" fill="#e5954b"/><ellipse cx="14" cy="6" rx="11" ry="4.500" fill="#e5954b" stroke="#4b3a2c" stroke-width="1.200" /><path d="M3 14c0 3 5 5 11 5s11-2 11-5M14 1.500v9M14 10.500V27M8 10v16M20 10v16M6 3.500l16 5M22 3.500l-16 5" stroke="#4b3a2c" stroke-width="1.200" fill="none"/></svg>
<svg style="left:150px;top:107px;" width="28" height="28" viewBox="0 0 28 28"><path d="M14 1L3.500 22c0 3 4.500 5 10.500 5s10.500-2 10.500-5z" fill="#e5954b"/><path d="M14 1v26M7 15c3 2 11 2 14 0" stroke="#4b3a2c" stroke-width="1.200" fill="none"/></svg>
<svg style="left:185px;top:107px;" width="28" height="28" viewBox="0 0 28 28"><ellipse cx="14" cy="14" rx="10.500" ry="13" fill="#e5954b" transform="rotate(-25 14 14)"/><ellipse cx="15" cy="14" rx="3" ry="7" fill="#444" transform="rotate(-25 14 14)"/><path d="M5 8l6 3M18 3l-1 6M24 12l-6 2M22 22l-5-4M11 26l2-6M4 17l6-1" stroke="#4b3a2c" stroke-width="1.200" fill="none"/></svg>
<svg style="left:220px;top:107px;" width="28" height="28" viewBox="0 0 28 28"><path d="M14 1.500l12.500 12.500L14 26.500 1.500 14z" fill="#e5954b"/><path d="M7.750 7.750l12.500 12.500M20.250 7.750L7.750 20.250" stroke="#4b3a2c" stroke-width="1.200" fill="none"/></svg>
<svg style="left:255px;top:107px;" width="28" height="28" viewBox="0 0 28 28"><ellipse cx="14" cy="14" rx="12" ry="7.500" fill="#e5954b"/><path d="M2 14h24M6 8.500l16 11M22 8.500L6 19.500" stroke="#4b3a2c" stroke-width="1.200" fill="none"/></svg>
<div style="left:292px;top:104px;width:2px;height:35px;background:#8a8a8a;"></div>
<svg style="left:303px;top:107px;" width="28" height="28" viewBox="0 0 28 28"><path d="M14 1l11.500 6.500v13L14 27 2.500 20.500v-13z" fill="#e5954b"/><path d="M14 1L6 17h16zM2.500 7.500L6 17l-3.500 3.500M25.500 7.500L22 17l3.500 3.500M6 17l8 10 8-10M2.500 7.500L14 1l11.500 6.500" stroke="#4b3a2c" stroke-width="1.200" fill="none"/><path d="M28 21v7h-7z" fill="#d8d8d8"/></svg>
<div style="left:339px;top:104px;width:2px;height:35px;background:#8a8a8a;"></div>
<svg style="left:349px;top:107px;" width="28" height="28" viewBox="0 0 28 28"><path d="M14 0c1.500 8 4.500 12 14 14-9.500 2-12.500 6-14 14-1.500-8-4.500-12-14-14 9.500-2 12.500-6 14-14z" fill="#e5954b"/><path d="M28 21v7h-7z" fill="#d8d8d8"/></svg>
<span style="top:101.00px;font-size:33px;line-height:39px;color:#e5954b;white-space:pre;font-weight:bold;font-family:'Liberation Serif', serif;letter-spacing:-0.016px;left:387px;">T</span>
<svg style="left:419px;top:107px;" width="28" height="28" viewBox="0 0 28 28"><rect x="3" y="3" width="22" height="22" fill="#e5954b"/></svg>
<span style="top:113.00px;font-size:12px;line-height:16px;color:#3c2a18;white-space:pre;font-weight:bold;letter-spacing:0.104px;left:422.5px;">svg</span>
<div style="left:456px;top:104px;width:2px;height:35px;background:#8a8a8a;"></div>
<svg style="left:466px;top:107px;" width="28" height="28" viewBox="0 0 28 28"><circle cx="14" cy="17" r="6" fill="none" stroke="#d0d0d0" stroke-width="1.500"/><circle cx="14" cy="17" r="2.800" fill="#d0d0d0"/><path d="M14 1v11M3 25l6-4M25 25l-6-4" stroke="#45b4c7" stroke-width="1.800" fill="none"/></svg>
<svg style="left:501px;top:107px;" width="28" height="28" viewBox="0 0 28 28"><circle cx="9" cy="8" r="7" fill="#45b4c7"/><path d="M9 3.500V8h4" stroke="#e8e8e8" stroke-width="1.400" fill="none"/><path d="M13 12h10M8 17h3M13 17h9M8 22h3M13 22h4" stroke="#45b4c7" stroke-width="1.400"/><path d="M18.500 19.500l7 7M25.500 19.500l-7 7" stroke="#d8d8d8" stroke-width="2"/></svg>
<svg style="left:536px;top:107px;" width="28" height="28" viewBox="0 0 28 28"><path d="M14 0v17M6.500 4.200l15 8.600M21.500 4.200l-15 8.600M11.500 1.500l2.500 2.500 2.500-2.500M11.500 15.500l2.500-2.500 2.500 2.500M6 7.800l3.500.500-.800-3.300M22 7.800l-3.500.500.800-3.300M6 9.200l3.500-.500-.800 3.300M22 9.200l-3.500-.500.800 3.300" stroke="#d4d4d4" stroke-width="1.200" fill="none"/><rect x="-1" y="17" width="30" height="11" fill="#4f4f4f"/></svg>
<span style="top:122.00px;font-size:11px;line-height:14px;color:#45b4c7;white-space:pre;font-weight:bold;letter-spacing:0.306px;left:537px;">0,0,0</span>
<div style="left:573px;top:104px;width:2px;height:35px;background:#8a8a8a;"></div>
<svg style="left:583px;top:107px;" width="28" height="28" viewBox="0 0 28 28"><circle cx="14" cy="14" r="12" fill="none" stroke="#d0d0d0" stroke-width="1.500"/><path d="M14 5l9 4.500-9 4.500-9-4.500z" fill="#e5954b"/><path d="M14 13l9 4.500-9 4.500-9-4.500z" fill="#e5954b"/></svg>
<svg style="left:618px;top:107px;" width="28" height="28" viewBox="0 0 28 28"><rect x="4" y="3" width="9" height="9" fill="#c9c9c9"/><rect x="15" y="3" width="9" height="9" fill="#c9c9c9"/><rect x="15" y="14" width="9" height="9" fill="#c9c9c9"/><rect x="2" y="15" width="9.500" height="9.500" fill="#e5954b"/></svg>
<svg style="left:652px;top:107px;" width="28" height="28" viewBox="0 0 28 28"><path d="M1 8l5.500-3.500L12 8v13l-5.500 3.500L1 21z" fill="#e5954b"/><path d="M16 8l5.500-3.500L27 8v13l-5.500 3.500L16 21z" fill="#e5954b"/><path d="M1 8l5.500 3 5.500-3M6.500 11v13.500M16 8l5.500 3 5.500-3M21.500 11v13.500" stroke="#4b3a2c" stroke-width="1.200" fill="none"/><path d="M14 0v28" stroke="#e0e0e0" stroke-width="1.200" stroke-dasharray="3 2"/></svg>
<svg style="left:688px;top:107px;" width="28" height="28" viewBox="0 0 28 28"><rect x="10" y="1" width="3" height="3" fill="#e5954b"/><rect x="10" y="5" width="3" height="3" fill="#e5954b"/><rect x="10" y="9" width="3" height="3" fill="#e5954b"/><rect x="10" y="13" width="3" height="3" fill="#e5954b"/><rect x="14" y="1" width="3" height="3" fill="#e5954b"/><rect x="14" y="5" width="3" height="3" fill="#e5954b"/><rect x="14" y="9" width="3" height="3" fill="#e5954b"/><rect x="14" y="13" width="3" height="3" fill="#e5954b"/><rect x="18" y="1" width="3" height="3" fill="#e5954b"/><rect x="18" y="5" width="3" height="3" fill="#e5954b"/><rect x="18" y="9" width="3" height="3" fill="#e5954b"/><rect x="18" y="13" width="3" height="3" fill="#e5954b"/><rect x="22" y="1" width="3" height="3" fill="#e5954b"/><rect x="22" y="5" width="3" height="3" fill="#e5954b"/><rect x="22" y="9" width="3" height="3" fill="#e5954b"/><rect x="22" y="13" width="3" height="3" fill="#e5954b"/><rect x="1" y="10" width="7" height="7" fill="#c9c9c9"/><rect x="1" y="18" width="7" height="7" fill="#c9c9c9"/><rect x="9" y="10" width="7" height="7" fill="#c9c9c9"/><rect x="9" y="18" width="7" height="7" fill="#c9c9c9"/><rect x="9" y="17" width="8" height="8" fill="#c9c9c9"/></svg>
<svg style="left:723px;top:107px;" width="28" height="28" viewBox="0 0 28 28"><rect x="2.0" y="9.0" width="3.5" height="3.5" fill="#c9c9c9"/><rect x="2.0" y="13.5" width="3.5" height="3.5" fill="#c9c9c9"/><rect x="2.0" y="18.0" width="3.5" height="3.5" fill="#c9c9c9"/><rect x="2.0" y="22.5" width="3.5" height="3.5" fill="#c9c9c9"/><rect x="6.5" y="9.0" width="3.5" height="3.5" fill="#c9c9c9"/><rect x="6.5" y="13.5" width="3.5" height="3.5" fill="#c9c9c9"/><rect x="6.5" y="18.0" width="3.5" height="3.5" fill="#c9c9c9"/><rect x="6.5" y="22.5" width="3.5" height="3.5" fill="#c9c9c9"/><rect x="11.0" y="9.0" width="3.5" height="3.5" fill="#c9c9c9"/><rect x="11.0" y="13.5" width="3.5" height="3.5" fill="#c9c9c9"/><rect x="11.0" y="18.0" width="3.5" height="3.5" fill="#c9c9c9"/><rect x="11.0" y="22.5" width="3.5" height="3.5" fill="#c9c9c9"/><rect x="15.5" y="9.0" width="3.5" height="3.5" fill="#c9c9c9"/><rect x="15.5" y="13.5" width="3.5" height="3.5" fill="#c9c9c9"/><rect x="15.5" y="18.0" width="3.5" height="3.5" fill="#c9c9c9"/><rect x="15.5" y="22.5" width="3.5" height="3.5" fill="#c9c9c9"/><rect x="10" y="1" width="8" height="8" fill="#e5954b"/><rect x="19" y="1" width="8" height="8" fill="#e5954b"/><rect x="10" y="10" width="8" height="8" fill="#e5954b"/><rect x="19" y="10" width="8" height="8" fill="#e5954b"/></svg>
<svg style="left:758px;top:107px;" width="28" height="28" viewBox="0 0 28 28"><path d="M5 16l8 5 12-6-8-5z" fill="#c9c9c9"/><path d="M3 5l5-3.500L13 5v16l-5 2.500L3 20z" fill="#e5954b"/><path d="M3 5l5 3 5-3M8 8v15.500" stroke="#4b3a2c" stroke-width="1.200" fill="none"/><path d="M9 18.500l8 5 8-4-8-5z" fill="#c9c9c9" stroke="#444" stroke-width=".6"/></svg>
<svg style="left:793px;top:107px;" width="28" height="28" viewBox="0 0 28 28"><path d="M3 4l6-3 6 3-6 3z" fill="#c9c9c9"/><path d="M1 12l6-3 6 3-6 3z" fill="#c9c9c9"/><path d="M15 12l6-3 6 3-6 3z" fill="#c9c9c9"/><path d="M8 8l6-3 6 3-6 3z" fill="none" stroke="#e5954b" stroke-dasharray="2 1.500"/><path d="M8 20l6-3 6 3-6 3z" fill="#e5954b"/><path d="M15 24l6-3 6 3-6 3z" fill="#c9c9c9"/></svg>
<svg style="left:828px;top:107px;" width="28" height="28" viewBox="0 0 28 28"><path d="M14 1l11.500 6v14L14 27 2.500 21V7z" fill="#e5954b"/><path d="M14 9l-9-4.500M14 9l9-4.500M14 9v17" stroke="#d8d8d8" stroke-width="3"/><path d="M14 1l11.500 6v14L14 27 2.500 21V7z" stroke="#4b3a2c" stroke-width="1.200" fill="none"/></svg>
<svg style="left:862px;top:107px;" width="28" height="28" viewBox="0 0 28 28"><rect x="11" y="1" width="16" height="15" fill="#e5954b"/><rect x="2" y="10" width="15" height="15" fill="#c9c9c9"/><path d="M11 10h6v6" fill="none" stroke="#444" stroke-width="1.200"/><path d="M17 1c0 6 3 9 10 9" stroke="#444" fill="none"/><rect x="0" y="15" width="3" height="3" fill="#444" stroke="#d8d8d8" stroke-width=".8"/><rect x="0" y="24" width="3" height="3" fill="#444" stroke="#d8d8d8" stroke-width=".8"/><rect x="8" y="24" width="3" height="3" fill="#444" stroke="#d8d8d8" stroke-width=".8"/><rect x="12.5" y="11.5" width="3" height="3" fill="#444" stroke="#d8d8d8" stroke-width=".8"/><rect x="8" y="8" width="3" height="3" fill="#444" stroke="#d8d8d8" stroke-width=".8"/></svg>
<svg style="left:898px;top:107px;" width="28" height="28" viewBox="0 0 28 28"><circle cx="14" cy="14" r="12" fill="#e5954b"/><circle cx="14" cy="14" r="6.500" stroke="#4b3a2c" stroke-width="1.200" fill="none"/><path d="M14 2v24M2 14h24M5.500 5.500l17 17M22.500 5.500l-17 17" stroke="#4b3a2c" stroke-width="1.200" fill="none"/></svg>
<svg style="left:933px;top:107px;" width="28" height="28" viewBox="0 0 28 28"><rect x="11" y="1" width="15" height="15" fill="#c9c9c9"/><path d="M11 16L26 1" stroke="#666"/><rect x="1" y="10" width="16" height="16" fill="#e5954b" stroke="#444" stroke-width=".8"/><path d="M1 10l16 16" stroke="#4b3a2c" stroke-width="1.200" fill="none"/></svg>
<svg style="left:967px;top:107px;" width="28" height="28" viewBox="0 0 28 28"><path d="M2 17l12-6 13 6-12 6z" fill="#c9c9c9"/><path d="M8 14l-1 3M14 12l6 9M21 14l-13 6" stroke="#444" stroke-width=".7"/><path d="M1 9l8-4 8 4-8 4z" fill="#e5954b"/><path d="M1 12.500l8-4 8 4-8 4z" fill="#e5954b" stroke="#444" stroke-width=".6"/></svg>
<svg style="left:1003px;top:107px;" width="28" height="28" viewBox="0 0 28 28"><rect x="3" y="3" width="20" height="20" fill="none" stroke="#d0d0d0" stroke-width="1.200"/><path d="M3 3l20 20M23 3L3 23" stroke="#e5954b" stroke-width="1.200"/><rect x="10" y="10" width="6" height="6" fill="#444" stroke="#e5954b" stroke-width="1.200"/><rect x="1.5" y="1.5" width="3.500" height="3.500" fill="#444" stroke="#d0d0d0"/><rect x="21.5" y="1.5" width="3.500" height="3.500" fill="#444" stroke="#d0d0d0"/><rect x="1.5" y="21.5" width="3.500" height="3.500" fill="#444" stroke="#d0d0d0"/><rect x="21.5" y="21.5" width="3.500" height="3.500" fill="#444" stroke="#d0d0d0"/></svg>
<svg style="left:1038px;top:107px;" width="28" height="28" viewBox="0 0 28 28"><rect x="2" y="11" width="3" height="3" fill="#c9c9c9"/><rect x="2" y="15" width="3" height="3" fill="#c9c9c9"/><rect x="2" y="19" width="3" height="3" fill="#c9c9c9"/><rect x="2" y="23" width="3" height="3" fill="#c9c9c9"/><rect x="6" y="11" width="3" height="3" fill="#c9c9c9"/><rect x="6" y="15" width="3" height="3" fill="#c9c9c9"/><rect x="6" y="19" width="3" height="3" fill="#c9c9c9"/><rect x="6" y="23" width="3" height="3" fill="#c9c9c9"/><rect x="10" y="11" width="3" height="3" fill="#c9c9c9"/><rect x="10" y="15" width="3" height="3" fill="#c9c9c9"/><rect x="10" y="19" width="3" height="3" fill="#c9c9c9"/><rect x="10" y="23" width="3" height="3" fill="#c9c9c9"/><rect x="14" y="11" width="3" height="3" fill="#c9c9c9"/><rect x="14" y="15" width="3" height="3" fill="#c9c9c9"/><rect x="14" y="19" width="3" height="3" fill="#c9c9c9"/><rect x="14" y="23" width="3" height="3" fill="#c9c9c9"/><circle cx="18" cy="10" r="8.500" fill="#e5954b"/><path d="M18 1.500v17M9.500 10h17M12 4.500c4 2 8 2 12 0M12 15.500c4-2 8-2 12 0M14 2.500c-2 5-2 10 0 15M22 2.500c2 5 2 10 0 15" stroke="#4b3a2c" stroke-width="1.200" fill="none"/></svg>
<div style="left:1075px;top:104px;width:2px;height:35px;background:#8a8a8a;"></div>
<svg style="left:1085px;top:107px;" width="28" height="28" viewBox="0 0 28 28"><path d="M3 9L19 3M3 9v17" stroke="#e5954b" stroke-width="1.200" fill="none"/><path d="M4 26L24 6l2.500 2.500L9 24z" fill="#cfcfcf"/><path d="M22 8l3-3.500 2.500 2.500-3 3.500z" fill="#bdbdbd"/><rect x="1.5" y="7.5" width="3" height="3" fill="#444" stroke="#e5954b"/><rect x="17.5" y="1.5" width="3" height="3" fill="#444" stroke="#e5954b"/><rect x="1.5" y="24.5" width="3" height="3" fill="#444" stroke="#e5954b"/></svg>
<svg style="left:1120px;top:107px;" width="28" height="28" viewBox="0 0 28 28"><path d="M4 3.500h20M4 24.500h20M4 3.500v21M24 3.500v21" stroke="#d0d0d0" stroke-width="1.200"/><path d="M14 3.500v21" stroke="#e5954b" stroke-width="1.200"/><rect x="2.5" y="2" width="3" height="3" fill="#444" stroke="#d0d0d0"/><rect x="2.5" y="23" width="3" height="3" fill="#444" stroke="#d0d0d0"/><rect x="22.5" y="2" width="3" height="3" fill="#444" stroke="#d0d0d0"/><rect x="22.5" y="23" width="3" height="3" fill="#444" stroke="#d0d0d0"/><rect x="12" y="1.5" width="4" height="4" fill="#444" stroke="#e5954b"/><rect x="12" y="22.5" width="4" height="4" fill="#444" stroke="#e5954b"/></svg>
<svg style="left:1155px;top:107px;" width="28" height="28" viewBox="0 0 28 28"><rect x="2.500" y="2.500" width="9" height="9" fill="none" stroke="#d0d0d0" stroke-width="1.300" stroke-dasharray="2.500 2"/><rect x="2" y="20" width="3.500" height="3.500" fill="#e5954b"/><path d="M10 24l2-5L24 6l3.500 3.500L15 22z" fill="#cfcfcf"/><path d="M10 24l1.200-3.200 2 2z" fill="#e5954b"/></svg>
<div style="left:1192px;top:104px;width:2px;height:35px;background:#8a8a8a;"></div>
<svg style="left:1202px;top:107px;" width="28" height="28" viewBox="0 0 28 28"><rect x="2" y="3" width="22" height="22" fill="#5fba94"/><rect x="17" y="18" width="9" height="9" fill="#e8e8e8"/><path d="M17 18h3v3h-3zM23 18h3v3h-3zM20 21h3v3h-3zM17 24h3v3h-3zM23 24h3v3h-3z" fill="#333"/></svg>
<svg style="left:1237px;top:107px;" width="28" height="28" viewBox="0 0 28 28"><path d="M2 4c6 3 14 3 21 0v21H2z" fill="#5fba94"/><rect x="17" y="18" width="9" height="9" fill="#e8e8e8"/><path d="M17 18h3v3h-3zM23 18h3v3h-3zM20 21h3v3h-3zM17 24h3v3h-3zM23 24h3v3h-3z" fill="#333"/></svg>
<svg style="left:1272px;top:107px;" width="28" height="28" viewBox="0 0 28 28"><path d="M1 7c8-5 16-5 24 0-1 8-3 14-6 18H7C4 21 2 15 1 7z" fill="#5fba94"/><path d="M1 7c8 5 16 5 24 0" stroke="#444" stroke-width=".8" fill="none"/><rect x="17" y="18" width="9" height="9" fill="#e8e8e8"/><path d="M17 18h3v3h-3zM23 18h3v3h-3zM20 21h3v3h-3zM17 24h3v3h-3zM23 24h3v3h-3z" fill="#333"/></svg>
<svg style="left:1307px;top:107px;" width="28" height="28" viewBox="0 0 28 28"><path d="M13 2l11 5.500v12L13 26 2 19.500v-12z" fill="#5fba94"/><path d="M2 7.500l11 5.500 11-5.500M13 13v13" stroke="#e8e8e8" stroke-width="1.200" fill="none"/><rect x="17" y="18" width="9" height="9" fill="#e8e8e8"/><path d="M17 18h3v3h-3zM23 18h3v3h-3zM20 21h3v3h-3zM17 24h3v3h-3zM23 24h3v3h-3z" fill="#333"/></svg>
<svg style="left:1342px;top:107px;" width="28" height="28" viewBox="0 0 28 28"><path d="M2 22c0-8 6-6 9-9s3-9 12-8" stroke="#5fba94" stroke-width="4" fill="none"/><path d="M6 26c0-6 6-5 9-8s4-7 10-7" stroke="#5fba94" stroke-width="2.500" fill="none"/><rect x="18" y="18" width="9" height="9" fill="#e8e8e8"/><path d="M18 18h3v3h-3zM24 18h3v3h-3zM21 21h3v3h-3zM18 24h3v3h-3zM24 24h3v3h-3z" fill="#333"/></svg>
<svg style="left:1377px;top:107px;" width="28" height="28" viewBox="0 0 28 28"><rect x="2" y="2" width="24" height="24" fill="#d0d0d0"/><rect x="2" y="2" width="24" height="4" fill="#444" stroke="#d0d0d0"/><rect x="4" y="8" width="20" height="16" fill="#5fba94"/><path d="M8 10h4v4H8zM16 10h4v4h-4zM12 14h4v4h-4zM8 18h4v4H8zM16 18h4v4h-4z" fill="#333"/><path d="M12 10h4v4h-4zM8 14h4v4H8zM16 14h4v4h-4zM12 18h4v4h-4z" fill="#eee"/></svg>
<svg style="left:1412px;top:107px;" width="28" height="28" viewBox="0 0 28 28"><path d="M1 19c8-8 18-8 26 0M1 9c8 8 18 8 26 0" stroke="#5fba94" stroke-width="3" fill="none"/><path d="M8 5l12 9M20 5L8 14" stroke="#e0e0e0" stroke-width="1.200" stroke-dasharray="2 1.500"/></svg>
<svg style="left:1447px;top:107px;" width="28" height="28" viewBox="0 0 28 28"><path d="M1 24C8 18 18 8 27 2M3 3c6 8 14 16 24 22" stroke="#5fba94" stroke-width="1.500" fill="none"/><path d="M3 26L21 5l5-3-2 5.500L6 27z" fill="#d6d6d6"/><path d="M4 4l8 10" stroke="#d6d6d6" stroke-width="3"/></svg>
<svg style="left:1487px;top:104px;" width="17" height="17" viewBox="0 0 17 17"><path d="M8 0c-3 0-4 1-4 3v2h5v1H2C0 6 0 8 0 9.500S0 13 2 13h2v-2.500c0-2 1-3 3-3h4c1.500 0 2.500-1 2.500-2.500V3c0-2-2-3-5.500-3z" fill="#1c1c1c"/><circle cx="5.800" cy="2.300" r=".9" fill="#ddd"/><path d="M9 17c3 0 4-1 4-3v-2H8v-1h7c2 0 2-2 2-3.500S17 4 15 4h-2v2.500c0 2-1 3-3 3H6c-1.500 0-2.500 1-2.500 2.500V14c0 2 2 3 5.500 3z" fill="#e0e0e0"/><circle cx="11.200" cy="14.700" r=".9" fill="#222"/></svg>
<div style="left:0px;top:148px;width:1920px;height:753px;background:#444444;"></div>
<div style="left:0px;top:148px;width:1px;height:753px;background:#3a3a3a;"></div>
<svg style="left:3px;top:154px;" width="40" height="4" viewBox="0 0 40 4"><rect x="0" y="0" width="1" height="1" fill="#6f6f6f"/><rect x="2" y="0" width="1" height="1" fill="#6f6f6f"/><rect x="4" y="0" width="1" height="1" fill="#6f6f6f"/><rect x="6" y="0" width="1" height="1" fill="#6f6f6f"/><rect x="8" y="0" width="1" height="1" fill="#6f6f6f"/><rect x="10" y="0" width="1" height="1" fill="#6f6f6f"/><rect x="12" y="0" width="1" height="1" fill="#6f6f6f"/><rect x="14" y="0" width="1" height="1" fill="#6f6f6f"/><rect x="16" y="0" width="1" height="1" fill="#6f6f6f"/><rect x="18" y="0" width="1" height="1" fill="#6f6f6f"/><rect x="20" y="0" width="1" height="1" fill="#6f6f6f"/><rect x="22" y="0" width="1" height="1" fill="#6f6f6f"/><rect x="24" y="0" width="1" height="1" fill="#6f6f6f"/><rect x="26" y="0" width="1" height="1" fill="#6f6f6f"/><rect x="28" y="0" width="1" height="1" fill="#6f6f6f"/><rect x="30" y="0" width="1" height="1" fill="#6f6f6f"/><rect x="32" y="0" width="1" height="1" fill="#6f6f6f"/><rect x="34" y="0" width="1" height="1" fill="#6f6f6f"/><rect x="36" y="0" width="1" height="1" fill="#6f6f6f"/><rect x="0" y="2" width="1" height="1" fill="#6f6f6f"/><rect x="2" y="2" width="1" height="1" fill="#6f6f6f"/><rect x="4" y="2" width="1" height="1" fill="#6f6f6f"/><rect x="6" y="2" width="1" height="1" fill="#6f6f6f"/><rect x="8" y="2" width="1" height="1" fill="#6f6f6f"/><rect x="10" y="2" width="1" height="1" fill="#6f6f6f"/><rect x="12" y="2" width="1" height="1" fill="#6f6f6f"/><rect x="14" y="2" width="1" height="1" fill="#6f6f6f"/><rect x="16" y="2" width="1" height="1" fill="#6f6f6f"/><rect x="18" y="2" width="1" height="1" fill="#6f6f6f"/><rect x="20" y="2" width="1" height="1" fill="#6f6f6f"/><rect x="22" y="2" width="1" height="1" fill="#6f6f6f"/><rect x="24" y="2" width="1" height="1" fill="#6f6f6f"/><rect x="26" y="2" width="1" height="1" fill="#6f6f6f"/><rect x="28" y="2" width="1" height="1" fill="#6f6f6f"/><rect x="30" y="2" width="1" height="1" fill="#6f6f6f"/><rect x="32" y="2" width="1" height="1" fill="#6f6f6f"/><rect x="34" y="2" width="1" height="1" fill="#6f6f6f"/><rect x="36" y="2" width="1" height="1" fill="#6f6f6f"/></svg>
<div style="left:44px;top:148px;width:268px;height:753px;background:#3a3a3a;"></div>
<div style="left:46px;top:168px;width:2px;height:733px;background:#444444;"></div>
<svg style="left:14px;top:164px;" width="22" height="30" viewBox="0 0 22 30"><path d="M3 2l16 15-7 .500 4 8.500-3.500 1.700-4-8.700L3 23.500z" fill="#d2d2d2"/></svg>
<svg style="left:8px;top:200px;" width="28" height="32" viewBox="0 0 28 32"><ellipse cx="12" cy="12" rx="11.500" ry="6.500" transform="rotate(-32 12 12)" fill="none" stroke="#45b4c7" stroke-width="2" stroke-dasharray="5 3"/><path d="M13 8l13 12-5.500.500 3 7-3 1.300-3-7-4.500 4z" fill="#d2d2d2"/></svg>
<svg style="left:8px;top:238px;" width="30" height="30" viewBox="0 0 30 30"><ellipse cx="11" cy="18" rx="11" ry="7" transform="rotate(38 11 18)" fill="none" stroke="#45b4c7" stroke-width="2" stroke-dasharray="5 3"/><path d="M16.500 12.500L27 1.500l2.500 2.500L19.500 15.500z" fill="#d2d2d2"/><path d="M9 19c3 0 5-4 7.500-6.500l3 3C17 18 14 21 9 19z" fill="#d2d2d2"/></svg>
<div style="left:4px;top:272px;width:36px;height:36px;background:#5285a6;"></div>
<svg style="left:4px;top:272px;" width="36" height="36" viewBox="0 0 36 36"><rect x="12" y="12" width="12" height="12" fill="#d6d6d6"/><path d="M18 4l4.500 3.500h-9zM18 32l4.500-3.500h-9zM4 18l3.500-4.500v9zM32 18l-3.500-4.500v9z" fill="#45b4c7" stroke="#2f6f80" stroke-width=".600"/><rect x="12" y="12" width="12" height="12" fill="none" stroke="#3a3a3a" stroke-width=".800"/></svg>
<svg style="left:6px;top:311px;" width="32" height="32" viewBox="0 0 32 32"><path d="M16 29A13 13 0 1 1 29 16" fill="none" stroke="#45b4c7" stroke-width="1.800"/><path d="M25.500 15h7l-3.500 5z" fill="#45b4c7"/><path d="M16 8l7.500 7.500L16 23l-7.500-7.500z" fill="#d6d6d6"/></svg>
<svg style="left:9px;top:350px;" width="28" height="28" viewBox="0 0 28 28"><rect x="2" y="1.500" width="24" height="24" fill="none" stroke="#45b4c7" stroke-width="1.300" stroke-dasharray="4 2.500"/><rect x="1" y="15" width="11" height="11" fill="#d6d6d6"/><path d="M12 11h5v5" fill="none" stroke="#45b4c7" stroke-width="1.300"/></svg>
<div style="left:5px;top:461px;width:35px;height:2px;background:#8f8f8f;"></div>
<div style="left:8px;top:472px;width:28px;height:28px;background:#c8c8c8;border:1px solid #444;outline:1px solid #9a9a9a;"></div>
<svg style="left:14px;top:478px;" width="16" height="16" viewBox="0 0 16 16"><path d="M8 1l3.500 3.500L8 8 4.500 4.500zM3.500 4.500L7 8l-3.500 3.500L0 8zM12.500 4.500L16 8l-3.500 3.500L9 8zM8 8l3.500 3.500L8 15l-3.500-3.500z" fill="#2b2b2b" stroke="#c8c8c8" stroke-width=".8"/></svg>
<svg style="left:8px;top:509px;" width="28" height="28" viewBox="0 0 28 28"><rect x="0.500" y="0.500" width="12" height="12" fill="#444" stroke="#bbb"/><rect x="15" y="0" width="13" height="13" fill="#c8c8c8"/><rect x="0.500" y="15.500" width="12" height="12" fill="#444" stroke="#bbb"/><rect x="15.500" y="15.500" width="12" height="12" fill="#444" stroke="#bbb"/><path d="M6.500 3v7M3 6.500h7M6.500 18v7M3 21.500h7M21.500 18v7M18 21.500h7" stroke="#ddd" stroke-width="1"/><path d="M21.500 3.500l3 3-3 3-3-3z" fill="#2b2b2b"/></svg>
<svg style="left:8px;top:546px;" width="28" height="28" viewBox="0 0 28 28"><rect x="0.500" y="0.500" width="12" height="27" fill="#444" stroke="#bbb"/><rect x="15" y="0" width="13" height="28" fill="#c8c8c8"/><path d="M6.500 10.500v7M3 14h7" stroke="#ddd" stroke-width="1"/><path d="M21.500 11l3 3-3 3-3-3z" fill="#2b2b2b"/></svg>
<div style="left:4px;top:579px;width:36px;height:36px;background:#5285a6;"></div>
<svg style="left:8px;top:583px;" width="28" height="28" viewBox="0 0 28 28"><rect x="0.500" y="0.500" width="27" height="27" fill="none" stroke="#e0e0e0" stroke-width="1"/><rect x="2.500" y="2.500" width="23" height="23" fill="none" stroke="#e0e0e0" stroke-width="1"/><rect x="8.5" y="5" width="7" height="1.500" fill="#dcdcdc"/><rect x="5.0" y="4" width="3.500" height="3.500" fill="#e8e8e8" stroke="#3a3a3a" stroke-width=".500"/><rect x="13" y="10" width="8" height="1.500" fill="#dcdcdc"/><rect x="9.5" y="9" width="3.500" height="3.500" fill="#e8e8e8" stroke="#3a3a3a" stroke-width=".500"/><rect x="13" y="15" width="6" height="1.500" fill="#dcdcdc"/><rect x="9.5" y="14" width="3.500" height="3.500" fill="#e8e8e8" stroke="#3a3a3a" stroke-width=".500"/><rect x="13" y="20" width="8" height="1.500" fill="#dcdcdc"/><rect x="9.5" y="19" width="3.500" height="3.500" fill="#e8e8e8" stroke="#3a3a3a" stroke-width=".500"/><path d="M7 8v13.500M7 11h2.500M7 16h2.500M7 21h2.500" stroke="#dcdcdc" stroke-width="1" fill="none"/></svg>
<svg style="left:5px;top:864px;" width="34" height="31" viewBox="0 0 34 31"><defs><linearGradient id="mg1" x1="0" y1="0" x2="0" y2="1"><stop offset="0" stop-color="#9adde2"/><stop offset="1" stop-color="#4da9b0"/></linearGradient></defs><path d="M0.800 0.500V30H9V14.500z" fill="#0f9aa2"/><path d="M0.800 30L6.500 18.500 9 23v7z" fill="#0b7f88"/><path d="M23 1h10L20.500 24 17 16z" fill="#10acb2"/><path d="M33 1v29h-8V16z" fill="#18b9bf"/><path d="M25 30V16l5-9.500z" fill="#0e8d96"/><path d="M0.800 0.500L10.500 0l10 24H14z" fill="url(#mg1)"/></svg>
<div style="left:48px;top:151px;width:64px;height:18px;background:#444444;border-radius:3px 3px 0 0;"></div>
<span style="top:152.00px;font-size:12px;line-height:16px;color:#eeeeee;white-space:pre;letter-spacing:0.184px;left:57.5px;">Outliner</span>
<div style="left:48px;top:168px;width:260px;height:731px;background:#444444;border:1px solid #7c7c7c;"></div>
<span style="top:170.00px;font-size:12px;line-height:16px;color:#d2d2d2;white-space:pre;letter-spacing:-0.194px;left:56.5px;">Display</span>
<span style="top:170.00px;font-size:12px;line-height:16px;color:#d2d2d2;white-space:pre;letter-spacing:-0.133px;left:109.0px;">Show</span>
<span style="top:170.00px;font-size:12px;line-height:16px;color:#d2d2d2;white-space:pre;letter-spacing:0.078px;left:152.5px;">Help</span>
<svg style="left:54px;top:193px;" width="17" height="20" viewBox="0 0 17 20"><path d="M3 1h11M3 19h11M1 4v12M16 4v12" stroke="#5d5d5d" stroke-width="2" stroke-dasharray="3 2" fill="none"/><rect x="4" y="4" width="9" height="12" fill="#4f4f4f"/></svg>
<div style="left:77px;top:194px;width:229px;height:19px;background:#2b2b2b;border-radius:3px;"></div>
<span style="top:196.00px;font-size:12px;line-height:16px;color:#8c8c8c;white-space:pre;letter-spacing:-0.670px;left:80px;">Search...</span>
<svg style="left:291px;top:201px;" width="10" height="6" viewBox="0 0 10 6"><path d="M0 0h10l-5 5.500z" fill="#c8c8c8"/></svg>
<div style="left:50px;top:214px;width:245px;height:664px;background:#373737;"></div>
<div style="left:295px;top:214px;width:12px;height:664px;background:#373737;"></div>
<svg style="left:295px;top:216px;" width="12" height="8" viewBox="0 0 12 8"><path d="M1 7l5-6 5 6z" fill="#c0c0c0"/></svg>
<div style="left:297px;top:227px;width:9px;height:638px;background:#5d5d5d;border-radius:4.500px;"></div>
<svg style="left:295px;top:868px;" width="12" height="8" viewBox="0 0 12 8"><path d="M1 1l5 6 5-6z" fill="#c0c0c0"/></svg>
<div style="left:50px;top:878px;width:257px;height:14px;background:#373737;"></div>
<svg style="left:52px;top:881px;" width="6" height="10" viewBox="0 0 6 10"><path d="M6 0L0 5l6 5z" fill="#c0c0c0"/></svg>
<svg style="left:284px;top:881px;" width="6" height="10" viewBox="0 0 6 10"><path d="M0 0l6 5-6 5z" fill="#c0c0c0"/></svg>
<div style="left:63px;top:881px;width:218px;height:9px;background:#5d5d5d;border-radius:4.500px;"></div>
<svg style="left:135px;top:892px;" width="86" height="2" viewBox="0 0 86 2"><rect x="0" y="0" width="1" height="1" fill="#8a8a8a"/><rect x="2" y="0" width="1" height="1" fill="#8a8a8a"/><rect x="4" y="0" width="1" height="1" fill="#8a8a8a"/><rect x="6" y="0" width="1" height="1" fill="#8a8a8a"/><rect x="8" y="0" width="1" height="1" fill="#8a8a8a"/><rect x="10" y="0" width="1" height="1" fill="#8a8a8a"/><rect x="12" y="0" width="1" height="1" fill="#8a8a8a"/><rect x="14" y="0" width="1" height="1" fill="#8a8a8a"/><rect x="16" y="0" width="1" height="1" fill="#8a8a8a"/><rect x="18" y="0" width="1" height="1" fill="#8a8a8a"/><rect x="20" y="0" width="1" height="1" fill="#8a8a8a"/><rect x="22" y="0" width="1" height="1" fill="#8a8a8a"/><rect x="24" y="0" width="1" height="1" fill="#8a8a8a"/><rect x="26" y="0" width="1" height="1" fill="#8a8a8a"/><rect x="28" y="0" width="1" height="1" fill="#8a8a8a"/><rect x="30" y="0" width="1" height="1" fill="#8a8a8a"/><rect x="32" y="0" width="1" height="1" fill="#8a8a8a"/><rect x="34" y="0" width="1" height="1" fill="#8a8a8a"/><rect x="36" y="0" width="1" height="1" fill="#8a8a8a"/><rect x="38" y="0" width="1" height="1" fill="#8a8a8a"/><rect x="40" y="0" width="1" height="1" fill="#8a8a8a"/><rect x="42" y="0" width="1" height="1" fill="#8a8a8a"/><rect x="44" y="0" width="1" height="1" fill="#8a8a8a"/><rect x="46" y="0" width="1" height="1" fill="#8a8a8a"/><rect x="48" y="0" width="1" height="1" fill="#8a8a8a"/><rect x="50" y="0" width="1" height="1" fill="#8a8a8a"/><rect x="52" y="0" width="1" height="1" fill="#8a8a8a"/><rect x="54" y="0" width="1" height="1" fill="#8a8a8a"/><rect x="56" y="0" width="1" height="1" fill="#8a8a8a"/><rect x="58" y="0" width="1" height="1" fill="#8a8a8a"/><rect x="60" y="0" width="1" height="1" fill="#8a8a8a"/><rect x="62" y="0" width="1" height="1" fill="#8a8a8a"/><rect x="64" y="0" width="1" height="1" fill="#8a8a8a"/><rect x="66" y="0" width="1" height="1" fill="#8a8a8a"/><rect x="68" y="0" width="1" height="1" fill="#8a8a8a"/><rect x="70" y="0" width="1" height="1" fill="#8a8a8a"/><rect x="72" y="0" width="1" height="1" fill="#8a8a8a"/><rect x="74" y="0" width="1" height="1" fill="#8a8a8a"/><rect x="76" y="0" width="1" height="1" fill="#8a8a8a"/><rect x="78" y="0" width="1" height="1" fill="#8a8a8a"/><rect x="80" y="0" width="1" height="1" fill="#8a8a8a"/><rect x="82" y="0" width="1" height="1" fill="#8a8a8a"/><rect x="84" y="0" width="1" height="1" fill="#8a8a8a"/></svg>
<svg style="left:86px;top:218px;" width="15" height="11" viewBox="0 0 15 11"><rect x="0" y="1.500" width="10" height="8" fill="#c8c8c8"/><path d="M10.500 5.500l4-4v8z" fill="#c8c8c8"/></svg>
<span style="top:216.00px;font-size:12px;line-height:16px;color:#7f7f7f;white-space:pre;letter-spacing:0.394px;left:104px;">persp</span>
<svg style="left:86px;top:238px;" width="15" height="11" viewBox="0 0 15 11"><rect x="0" y="1.500" width="10" height="8" fill="#c8c8c8"/><path d="M10.500 5.500l4-4v8z" fill="#c8c8c8"/></svg>
<span style="top:236.00px;font-size:12px;line-height:16px;color:#7f7f7f;white-space:pre;letter-spacing:0.771px;left:104px;">top</span>
<svg style="left:86px;top:258px;" width="15" height="11" viewBox="0 0 15 11"><rect x="0" y="1.500" width="10" height="8" fill="#c8c8c8"/><path d="M10.500 5.500l4-4v8z" fill="#c8c8c8"/></svg>
<span style="top:256.00px;font-size:12px;line-height:16px;color:#7f7f7f;white-space:pre;letter-spacing:0.397px;left:104px;">front</span>
<svg style="left:86px;top:278px;" width="15" height="11" viewBox="0 0 15 11"><rect x="0" y="1.500" width="10" height="8" fill="#c8c8c8"/><path d="M10.500 5.500l4-4v8z" fill="#c8c8c8"/></svg>
<span style="top:276.00px;font-size:12px;line-height:16px;color:#7f7f7f;white-space:pre;letter-spacing:-0.254px;left:104px;">side</span>
<div style="left:50px;top:294px;width:245px;height:20px;background:#3f4b5a;"></div>
<svg style="left:71px;top:299px;" width="9" height="9" viewBox="0 0 9 9"><rect x="0.500" y="0.500" width="8" height="8" fill="none" stroke="#9a9a9a"/><path d="M2.500 4.500h4" stroke="#c0c0c0"/></svg>
<svg style="left:84px;top:298px;" width="17" height="12" viewBox="0 0 17 12"><path d="M5 0h12l-5 12H0z" fill="#d8d8d8"/><path d="M0 6h9M7 3l4 3-4 3z" stroke="#e03030" stroke-width="1" fill="#e03030"/></svg>
<span style="top:296.00px;font-size:12px;line-height:16px;color:#d8d8d8;white-space:pre;letter-spacing:-0.062px;left:104.5px;">group1</span>
<svg style="left:96px;top:317px;" width="17" height="13" viewBox="0 0 17 13"><path d="M8.500 0l4 3-4 3-4-3zM4 3.500l4 3-4 3-4-3zM13 3.500l4 3-4 3-4-3zM8.500 7l4 3-4 3-4-3z" fill="#d8d8d8" stroke="#373737" stroke-width=".700"/></svg>
<span style="top:316.00px;font-size:12px;line-height:16px;color:#d8d8d8;white-space:pre;letter-spacing:-0.508px;left:116px;">pCube1</span>
<div style="left:50px;top:334px;width:245px;height:20px;background:#5285a6;"></div>
<svg style="left:96px;top:337px;" width="17" height="13" viewBox="0 0 17 13"><path d="M8.500 0l4 3-4 3-4-3zM4 3.500l4 3-4 3-4-3zM13 3.500l4 3-4 3-4-3zM8.500 7l4 3-4 3-4-3z" fill="#d8d8d8" stroke="#2e2e2e" stroke-width=".700"/></svg>
<span style="top:336.00px;font-size:12px;line-height:16px;color:#ffffff;white-space:pre;letter-spacing:-0.733px;left:116px;">pCube1_LOD1</span>
<div style="left:50px;top:354px;width:245px;height:20px;background:#3f4b5a;"></div>
<svg style="left:71px;top:359px;" width="9" height="9" viewBox="0 0 9 9"><rect x="0.500" y="0.500" width="8" height="8" fill="none" stroke="#9a9a9a"/><path d="M2.500 4.500h4" stroke="#c0c0c0"/></svg>
<svg style="left:84px;top:358px;" width="17" height="12" viewBox="0 0 17 12"><path d="M5 0h12l-5 12H0z" fill="#d8d8d8"/><path d="M0 6h9M7 3l4 3-4 3z" stroke="#e03030" stroke-width="1" fill="#e03030"/></svg>
<span style="top:356.00px;font-size:12px;line-height:16px;color:#d8d8d8;white-space:pre;letter-spacing:-0.062px;left:104.5px;">group2</span>
<svg style="left:96px;top:377px;" width="17" height="13" viewBox="0 0 17 13"><path d="M8.500 0l4 3-4 3-4-3zM4 3.500l4 3-4 3-4-3zM13 3.500l4 3-4 3-4-3zM8.500 7l4 3-4 3-4-3z" fill="#d8d8d8" stroke="#373737" stroke-width=".700"/></svg>
<span style="top:376.00px;font-size:12px;line-height:16px;color:#d8d8d8;white-space:pre;letter-spacing:-0.508px;left:116px;">pCube1</span>
<div style="left:50px;top:394px;width:245px;height:20px;background:#5285a6;"></div>
<svg style="left:96px;top:397px;" width="17" height="13" viewBox="0 0 17 13"><path d="M8.500 0l4 3-4 3-4-3zM4 3.500l4 3-4 3-4-3zM13 3.500l4 3-4 3-4-3zM8.500 7l4 3-4 3-4-3z" fill="#d8d8d8" stroke="#2e2e2e" stroke-width=".700"/></svg>
<span style="top:396.00px;font-size:12px;line-height:16px;color:#ffffff;white-space:pre;letter-spacing:-0.784px;left:116px;">pCube1_LOD1_001</span>
<svg style="left:84px;top:415px;" width="17" height="17" viewBox="0 0 17 17"><circle cx="8.500" cy="8.500" r="7.500" fill="none" stroke="#d0d0d0" stroke-width="1.300"/><circle cx="7" cy="10" r="3.200" fill="#d0d0d0"/><path d="M8 4h5v9h-2.500V6.500H8z" fill="#45b4c7"/></svg>
<span style="top:416.00px;font-size:12px;line-height:16px;color:#d8d8d8;white-space:pre;letter-spacing:-0.138px;left:104.5px;">defaultLightSet</span>
<svg style="left:84px;top:435px;" width="17" height="17" viewBox="0 0 17 17"><circle cx="8.500" cy="8.500" r="7.500" fill="none" stroke="#d0d0d0" stroke-width="1.300"/><circle cx="7" cy="10" r="3.200" fill="#d0d0d0"/><path d="M8 4h5v9h-2.500V6.500H8z" fill="#45b4c7"/></svg>
<span style="top:436.00px;font-size:12px;line-height:16px;color:#d8d8d8;white-space:pre;letter-spacing:-0.108px;left:104.5px;">defaultObjectSet</span>
<svg style="left:70px;top:304px;" width="24" height="50" viewBox="0 0 24 50"><path d="M5.500 5v35.500h9M5.500 20.500h9" stroke="#8a8a8a" stroke-width="1" fill="none"/><circle cx="16.500" cy="20.500" r="2.200" fill="#9a9a9a"/><circle cx="16.500" cy="40.500" r="2.200" fill="#9a9a9a"/></svg>
<svg style="left:70px;top:364px;" width="24" height="50" viewBox="0 0 24 50"><path d="M5.500 5v35.500h9M5.500 20.500h9" stroke="#8a8a8a" stroke-width="1" fill="none"/><circle cx="16.500" cy="20.500" r="2.200" fill="#9a9a9a"/><circle cx="16.500" cy="40.500" r="2.200" fill="#9a9a9a"/></svg>
<div style="left:308px;top:148px;width:4px;height:753px;background:#3a3a3a;"></div>
<div style="left:1439px;top:148px;width:2px;height:753px;background:#3a3a3a;"></div>
<div style="left:312px;top:148px;width:1127px;height:753px;background:#444444;"></div>
<span style="top:154.00px;font-size:12px;line-height:16px;color:#d2d2d2;white-space:pre;letter-spacing:0.051px;left:323.5px;">View</span>
<span style="top:154.00px;font-size:12px;line-height:16px;color:#d2d2d2;white-space:pre;letter-spacing:-0.078px;left:364.0px;">Shading</span>
<span style="top:154.00px;font-size:12px;line-height:16px;color:#d2d2d2;white-space:pre;letter-spacing:0.182px;left:422.0px;">Lighting</span>
<span style="top:154.00px;font-size:12px;line-height:16px;color:#d2d2d2;white-space:pre;letter-spacing:-0.133px;left:480.0px;">Show</span>
<span style="top:154.00px;font-size:12px;line-height:16px;color:#d2d2d2;white-space:pre;letter-spacing:-0.316px;left:524.0px;">Renderer</span>
<span style="top:154.00px;font-size:12px;line-height:16px;color:#d2d2d2;white-space:pre;letter-spacing:-0.617px;left:586.0px;">Panels</span>
<svg style="left:318px;top:172px;" width="5" height="18" viewBox="0 0 5 18"><rect x="2" y="0" width="1" height="18" fill="#6a6a6a"/><rect x="1" y="4" width="3" height="10" rx="1" fill="#7a7a7a"/></svg>
<svg style="left:329px;top:173px;" width="15" height="16" viewBox="0 0 15 16"><rect x="0" y="4" width="10" height="8" fill="#d0d0d0"/><path d="M10.500 8l4-4v8z" fill="#d0d0d0"/></svg>
<svg style="left:347px;top:173px;" width="16" height="16" viewBox="0 0 16 16"><rect x="5" y="3" width="7" height="6" fill="#d0d0d0"/><path d="M12.500 6l3.500-3.500v7z" fill="#d0d0d0"/><rect x="0" y="8" width="7" height="7" fill="#45b4c7"/><path d="M1.500 8V6a2 2 0 0 1 4 0v2" stroke="#45b4c7" stroke-width="1.300" fill="none"/></svg>
<svg style="left:366px;top:173px;" width="17" height="16" viewBox="0 0 17 16"><rect x="6" y="3" width="7" height="6" fill="#d0d0d0"/><path d="M13.500 6L17 2.500v7z" fill="#d0d0d0"/><circle cx="5" cy="10.500" r="3.200" fill="none" stroke="#45b4c7" stroke-width="2.200" stroke-dasharray="1.700 1"/></svg>
<svg style="left:389px;top:173px;" width="9" height="16" viewBox="0 0 9 16"><path d="M0.500 2h7v12l-3.500-3L0.500 14z" fill="#d0d0d0"/></svg>
<svg style="left:405px;top:173px;" width="15" height="16" viewBox="0 0 15 16"><path d="M7 0l3 11H1z" fill="#45b4c7"/><path d="M3 12h12l-3 4H0z" fill="none" stroke="#d0d0d0" stroke-width="1"/><path d="M1 14L7 1" stroke="#d0d0d0" stroke-width="1"/></svg>
<svg style="left:424px;top:173px;" width="16" height="16" viewBox="0 0 16 16"><path d="M5 0v10M0 5h10M5 0l-2 2h4zM0 5l2-2v4zM10 5L8 3v4z" stroke="#d0d0d0" stroke-width="1" fill="#d0d0d0"/><circle cx="10.500" cy="10" r="3.500" fill="none" stroke="#45b4c7" stroke-width="1.500"/><path d="M8 13l-3 3" stroke="#45b4c7" stroke-width="1.800"/></svg>
<svg style="left:442px;top:173px;" width="15" height="16" viewBox="0 0 15 16"><path d="M4 10L12 1l2.500 2.500L6.500 12z" fill="#d0d0d0"/><path d="M1 15l1.500-4 3 2.500z" fill="#45b4c7"/><path d="M8 15c3 1 5-1 5-3" stroke="#d0d0d0" fill="none"/></svg>
<svg style="left:462px;top:172px;" width="5" height="18" viewBox="0 0 5 18"><rect x="2" y="0" width="1" height="18" fill="#6a6a6a"/><rect x="1" y="4" width="3" height="10" rx="1" fill="#7a7a7a"/></svg>
<div style="left:471px;top:171px;width:19px;height:19px;background:#5285a6;"></div>
<svg style="left:473px;top:173px;" width="15" height="16" viewBox="0 0 15 16"><rect x="0.500" y="1.500" width="14" height="13" fill="none" stroke="#f0f0f0" stroke-width="1.300"/><path d="M5 1v14M9.500 1v14M0 6h15M0 10.500h15" stroke="#f0f0f0" stroke-width="1"/></svg>
<svg style="left:491.5px;top:173px;" width="15" height="16" viewBox="0 0 15 16"><rect x="0.500" y="2.500" width="14" height="11" fill="#333" stroke="#d0d0d0"/><path d="M0 4h15M0 12h15" stroke="#d0d0d0" stroke-width="1.500" stroke-dasharray="1.500 1"/></svg>
<svg style="left:510px;top:173px;" width="16" height="16" viewBox="0 0 16 16"><rect x="0.500" y="2.500" width="15" height="12" fill="none" stroke="#d0d0d0"/><circle cx="8" cy="8.500" r="3" fill="#45b4c7"/></svg>
<div style="left:528px;top:172px;width:18px;height:18px;background:#4d4d4d;border:1px solid #383838;"></div>
<svg style="left:532px;top:173px;" width="10" height="16" viewBox="0 0 10 16"><circle cx="5" cy="8" r="3.800" fill="#3a3a3a"/></svg>
<svg style="left:548.5px;top:173px;" width="16" height="16" viewBox="0 0 16 16"><rect x="0.500" y="2.500" width="15" height="12" fill="none" stroke="#d0d0d0"/><path d="M8 2v13M0 8.500h16" stroke="#45b4c7" stroke-width="1.200" stroke-dasharray="1.500 1.500"/></svg>
<svg style="left:567px;top:173px;" width="16" height="16" viewBox="0 0 16 16"><rect x="0.500" y="2.500" width="15" height="12" fill="none" stroke="#d0d0d0"/><path d="M2 13l5-6 4 6z" fill="#45b4c7"/><circle cx="11" cy="6.500" r="2.200" fill="#45b4c7"/></svg>
<svg style="left:586px;top:173px;" width="16" height="16" viewBox="0 0 16 16"><rect x="0.500" y="2.500" width="15" height="12" fill="none" stroke="#d0d0d0"/></svg>
<span style="top:174.00px;font-size:12px;line-height:16px;color:#45b4c7;white-space:pre;font-weight:bold;font-family:'Liberation Serif', serif;letter-spacing:0.984px;left:589.5px;">T</span>
<svg style="left:606.5px;top:172px;" width="5" height="18" viewBox="0 0 5 18"><rect x="2" y="0" width="1" height="18" fill="#6a6a6a"/><rect x="1" y="4" width="3" height="10" rx="1" fill="#7a7a7a"/></svg>
<svg style="left:616px;top:173px;" width="15" height="16" viewBox="0 0 15 16"><path d="M7.500 0.500l6.500 3.500v8L7.500 15.500 1 12V4z" fill="none" stroke="#d0d0d0" stroke-width="1"/><path d="M1 4l6.500 3.500L14 4M7.500 7.500v8" stroke="#d0d0d0" stroke-width="1" fill="none"/></svg>
<div style="left:634px;top:171px;width:19px;height:19px;background:#5285a6;"></div>
<svg style="left:636px;top:173px;" width="15" height="16" viewBox="0 0 15 16"><path d="M7.500 0.500l6.500 3.500v8L7.500 15.500 1 12V4z" fill="#7fd6e4" stroke="#2b6f7c" stroke-width="1"/><path d="M1 4l6.500 3.500L14 4M7.500 7.500v8" stroke="#2b6f7c" stroke-width="1" fill="none"/></svg>
<svg style="left:656px;top:173px;" width="14" height="16" viewBox="0 0 14 16"><circle cx="7" cy="8" r="6.500" fill="#d0d0d0"/><path d="M7 1.500a6.500 6.500 0 0 1 0 13" fill="#555"/><path d="M3 3l8 10M2 8h10" stroke="#666" stroke-width=".800"/></svg>
<svg style="left:673.5px;top:173px;" width="15" height="16" viewBox="0 0 15 16"><path d="M7.500 0.500l6.500 3.500v8L7.500 15.500 1 12V4z" fill="#a8c8ce" stroke="#d0d0d0" stroke-width="1"/><path d="M1 4l6.500 3.500L14 4M7.500 7.500v8" stroke="#d0d0d0" stroke-width="1" fill="none"/></svg>
<svg style="left:693px;top:173px;" width="14" height="16" viewBox="0 0 14 16"><rect x="0" y="1" width="14" height="14" rx="3" fill="#888"/><rect x="1" y="2" width="2.500" height="2.500" fill="#ddd"/><rect x="1" y="4.5" width="2.500" height="2.500" fill="#555"/><rect x="1" y="7" width="2.500" height="2.500" fill="#ddd"/><rect x="1" y="9.5" width="2.500" height="2.500" fill="#555"/><rect x="1" y="12" width="2.500" height="2.500" fill="#ddd"/><rect x="3.5" y="2" width="2.500" height="2.500" fill="#555"/><rect x="3.5" y="4.5" width="2.500" height="2.500" fill="#ddd"/><rect x="3.5" y="7" width="2.500" height="2.500" fill="#555"/><rect x="3.5" y="9.5" width="2.500" height="2.500" fill="#ddd"/><rect x="3.5" y="12" width="2.500" height="2.500" fill="#555"/><rect x="6" y="2" width="2.500" height="2.500" fill="#ddd"/><rect x="6" y="4.5" width="2.500" height="2.500" fill="#555"/><rect x="6" y="7" width="2.500" height="2.500" fill="#ddd"/><rect x="6" y="9.5" width="2.500" height="2.500" fill="#555"/><rect x="6" y="12" width="2.500" height="2.500" fill="#ddd"/><rect x="8.5" y="2" width="2.500" height="2.500" fill="#555"/><rect x="8.5" y="4.5" width="2.500" height="2.500" fill="#ddd"/><rect x="8.5" y="7" width="2.500" height="2.500" fill="#555"/><rect x="8.5" y="9.5" width="2.500" height="2.500" fill="#ddd"/><rect x="8.5" y="12" width="2.500" height="2.500" fill="#555"/><rect x="11" y="2" width="2.500" height="2.500" fill="#ddd"/><rect x="11" y="4.5" width="2.500" height="2.500" fill="#555"/><rect x="11" y="7" width="2.500" height="2.500" fill="#ddd"/><rect x="11" y="9.5" width="2.500" height="2.500" fill="#555"/><rect x="11" y="12" width="2.500" height="2.500" fill="#ddd"/></svg>
<svg style="left:712px;top:173px;" width="15" height="16" viewBox="0 0 15 16"><circle cx="7.500" cy="6.500" r="3.800" fill="#d0d0d0"/><rect x="5.500" y="10.500" width="4" height="4" fill="#d0d0d0"/><path d="M7.500 0v1.500M1 6.500h1.500M12.500 6.500H14M2.500 2l1.200 1.200M12.500 2l-1.200 1.200" stroke="#d0d0d0" stroke-width="1"/></svg>
<svg style="left:730px;top:173px;" width="16" height="16" viewBox="0 0 16 16"><circle cx="10" cy="7" r="5" fill="#45b4c7"/><ellipse cx="5" cy="12.500" rx="5" ry="2.500" fill="#d0d0d0"/></svg>
<svg style="left:750.5px;top:172px;" width="5" height="18" viewBox="0 0 5 18"><rect x="2" y="0" width="1" height="18" fill="#6a6a6a"/><rect x="1" y="4" width="3" height="10" rx="1" fill="#7a7a7a"/></svg>
<svg style="left:760px;top:173px;" width="15" height="16" viewBox="0 0 15 16"><circle cx="8" cy="6" r="5" fill="#d0d0d0"/><path d="M1 12h12M2 14.500h11" stroke="#45b4c7" stroke-width="1.200"/></svg>
<svg style="left:780px;top:173px;" width="15" height="16" viewBox="0 0 15 16"><circle cx="9.500" cy="5.500" r="4.500" fill="#777"/><circle cx="6" cy="9" r="5" fill="#d0d0d0"/></svg>
<svg style="left:798.5px;top:173px;" width="14" height="16" viewBox="0 0 14 16"><circle cx="7" cy="8" r="5.500" fill="none" stroke="#d0d0d0" stroke-width="2"/><path d="M7 2.500a5.500 5.500 0 0 1 0 11" fill="none" stroke="#45b4c7" stroke-width="2.200"/></svg>
<div style="left:816px;top:172px;width:18px;height:18px;background:#4a4a4a;border:1px solid #383838;"></div>
<svg style="left:821px;top:173px;" width="10" height="16" viewBox="0 0 10 16"><rect x="0" y="4" width="9" height="9" fill="#2e3c42"/></svg>
<svg style="left:837px;top:172px;" width="5" height="18" viewBox="0 0 5 18"><rect x="2" y="0" width="1" height="18" fill="#6a6a6a"/><rect x="1" y="4" width="3" height="10" rx="1" fill="#7a7a7a"/></svg>
<svg style="left:847px;top:173px;" width="16" height="16" viewBox="0 0 16 16"><rect x="1" y="1.500" width="9" height="9" fill="none" stroke="#45b4c7" stroke-width="1.300" stroke-dasharray="2.500 1.500"/><path d="M7 5l7 6-3 .300 1.700 3.500-1.500.700-1.700-3.500L7 14z" fill="#d0d0d0"/></svg>
<svg style="left:867px;top:172px;" width="5" height="18" viewBox="0 0 5 18"><rect x="2" y="0" width="1" height="18" fill="#6a6a6a"/><rect x="1" y="4" width="3" height="10" rx="1" fill="#7a7a7a"/></svg>
<svg style="left:877px;top:173px;" width="15" height="16" viewBox="0 0 15 16"><rect x="4.500" y="1.500" width="9" height="9" fill="none" stroke="#d0d0d0" stroke-width="1.400"/><rect x="0.500" y="5.500" width="9" height="9" fill="#d0d0d0"/></svg>
<svg style="left:896px;top:173px;" width="15" height="16" viewBox="0 0 15 16"><rect x="4.500" y="1.500" width="9" height="9" fill="#d0d0d0"/><rect x="0.500" y="5.500" width="9" height="9" fill="#444" stroke="#d0d0d0" stroke-width="1.400"/></svg>
<svg style="left:916px;top:173px;" width="15" height="16" viewBox="0 0 15 16"><rect x="0.500" y="1.500" width="13" height="13" fill="none" stroke="#d0d0d0" stroke-width="1.400"/><path d="M3 12L11 4M11 4v4M11 4H7" stroke="#d0d0d0" stroke-width="1.300" fill="none"/></svg>
<svg style="left:935.5px;top:172px;" width="5" height="18" viewBox="0 0 5 18"><rect x="2" y="0" width="1" height="18" fill="#6a6a6a"/><rect x="1" y="4" width="3" height="10" rx="1" fill="#7a7a7a"/></svg>
<svg style="left:947px;top:173px;" width="14" height="16" viewBox="0 0 14 16"><circle cx="7" cy="8" r="6.500" fill="#d0d0d0"/><path d="M7 8L7 1.500M7 8l6 3M7 8l-6 3M7 8l5-5M7 8L2 3M7 8v6.500" stroke="#444" stroke-width="1.300"/><circle cx="7" cy="8" r="1.800" fill="#444"/></svg>
<div style="left:964px;top:173.5px;width:40px;height:15px;background:#2b2b2b;border-radius:2px;"></div>
<span style="top:174.00px;font-size:12px;line-height:16px;color:#dddddd;white-space:pre;letter-spacing:-0.590px;left:970px;">0.00</span>
<svg style="left:1009px;top:173px;" width="12" height="16" viewBox="0 0 12 16"><path d="M5 1h6v14H5" fill="none" stroke="#d0d0d0" stroke-width="1.600"/><path d="M0 8l5-4v8z" fill="#d0d0d0"/><rect x="6" y="4" width="4" height="8" fill="#d0d0d0"/></svg>
<div style="left:1026px;top:173.5px;width:38px;height:15px;background:#2b2b2b;border-radius:2px;"></div>
<span style="top:174.00px;font-size:12px;line-height:16px;color:#dddddd;white-space:pre;letter-spacing:-0.465px;left:1031px;">1.00</span>
<svg style="left:1067px;top:172px;" width="18" height="18" viewBox="0 0 18 18"><circle cx="9" cy="9" r="8.500" fill="#45b4c7"/><circle cx="9" cy="9" r="6.500" fill="none" stroke="#2a7886" stroke-width="1"/></svg>
<span style="top:177.00px;font-size:7px;line-height:9px;color:#0f4a55;white-space:pre;font-weight:bold;letter-spacing:-0.250px;left:1071px;">ON</span>
<div style="left:1087.5px;top:172px;width:163.5px;height:18px;background:#5d5d5d;border-radius:2px;"></div>
<div style="left:1230px;top:172px;width:1px;height:18px;background:#4c4c4c;"></div>
<span style="top:174.00px;font-size:12px;line-height:16px;color:#d2d2d2;white-space:pre;letter-spacing:-0.936px;left:1091px;">sRGB gamma</span>
<svg style="left:1236px;top:178px;" width="10" height="6" viewBox="0 0 10 6"><path d="M0 0h10l-5 5.500z" fill="#d0d0d0"/></svg>
<svg style="left:0;top:0;" width="1920" height="1040" viewBox="0 0 1920 1040"><defs><clipPath id="vp"><rect x="318" y="193" width="1115" height="702"/></clipPath></defs><g clip-path="url(#vp)"><rect x="318" y="193" width="1115" height="702" fill="#5d5d5d"/><g><path d="M408.8 638.7L811.4 460.2" stroke="#464646" stroke-width="1.100"/><path d="M408.8 638.7L883.3 928.0" stroke="#464646" stroke-width="1.100"/><path d="M422.6 647.0L825.1 464.5" stroke="#464646" stroke-width="1.100"/><path d="M431.8 628.5L905.6 906.5" stroke="#464646" stroke-width="1.100"/><path d="M436.6 655.6L839.0 468.8" stroke="#464646" stroke-width="1.100"/><path d="M454.0 618.6L926.8 885.9" stroke="#464646" stroke-width="1.100"/><path d="M451.1 664.5L853.2 473.3" stroke="#464646" stroke-width="1.100"/><path d="M475.6 609.1L947.1 866.3" stroke="#464646" stroke-width="1.100"/><path d="M466.0 673.5L867.7 477.8" stroke="#464646" stroke-width="1.100"/><path d="M496.5 599.8L966.5 847.6" stroke="#464646" stroke-width="1.100"/><path d="M481.3 682.9L882.4 482.5" stroke="#464646" stroke-width="1.100"/><path d="M516.8 590.8L985.1 829.6" stroke="#464646" stroke-width="1.100"/><path d="M497.0 692.5L897.5 487.2" stroke="#464646" stroke-width="1.100"/><path d="M536.4 582.1L1002.9 812.4" stroke="#464646" stroke-width="1.100"/><path d="M513.2 702.3L912.8 492.0" stroke="#464646" stroke-width="1.100"/><path d="M555.5 573.6L1019.9 795.9" stroke="#464646" stroke-width="1.100"/><path d="M529.9 712.5L928.5 496.9" stroke="#464646" stroke-width="1.100"/><path d="M574.0 565.4L1036.3 780.1" stroke="#464646" stroke-width="1.100"/><path d="M547.0 722.9L944.5 502.0" stroke="#464646" stroke-width="1.100"/><path d="M592.0 557.4L1052.1 764.9" stroke="#464646" stroke-width="1.100"/><path d="M564.7 733.7L960.8 507.1" stroke="#464646" stroke-width="1.100"/><path d="M609.5 549.7L1067.2 750.2" stroke="#464646" stroke-width="1.100"/><path d="M582.9 744.8L977.4 512.3" stroke="#464646" stroke-width="1.100"/><path d="M626.6 542.1L1081.8 736.2" stroke="#464646" stroke-width="1.100"/><path d="M601.7 756.3L994.5 517.7" stroke="#444444" stroke-width="2"/><path d="M643.1 534.8L1095.8 722.6" stroke="#444444" stroke-width="2"/><path d="M621.1 768.1L1011.8 523.1" stroke="#464646" stroke-width="1.100"/><path d="M659.2 527.7L1109.3 709.5" stroke="#464646" stroke-width="1.100"/><path d="M641.1 780.3L1029.6 528.7" stroke="#464646" stroke-width="1.100"/><path d="M674.9 520.7L1122.4 697.0" stroke="#464646" stroke-width="1.100"/><path d="M661.8 792.9L1047.7 534.4" stroke="#464646" stroke-width="1.100"/><path d="M690.2 513.9L1134.9 684.8" stroke="#464646" stroke-width="1.100"/><path d="M683.1 805.9L1066.3 540.2" stroke="#464646" stroke-width="1.100"/><path d="M705.0 507.3L1147.1 673.1" stroke="#464646" stroke-width="1.100"/><path d="M705.2 819.4L1085.3 546.2" stroke="#464646" stroke-width="1.100"/><path d="M719.5 500.9L1158.8 661.7" stroke="#464646" stroke-width="1.100"/><path d="M728.0 833.3L1104.7 552.3" stroke="#464646" stroke-width="1.100"/><path d="M733.6 494.7L1170.2 650.8" stroke="#464646" stroke-width="1.100"/><path d="M751.6 847.7L1124.5 558.5" stroke="#464646" stroke-width="1.100"/><path d="M747.4 488.6L1181.1 640.2" stroke="#464646" stroke-width="1.100"/><path d="M776.1 862.6L1144.8 564.9" stroke="#464646" stroke-width="1.100"/><path d="M760.9 482.6L1191.7 629.9" stroke="#464646" stroke-width="1.100"/><path d="M801.4 878.0L1165.6 571.4" stroke="#464646" stroke-width="1.100"/><path d="M774.0 476.8L1202.0 620.0" stroke="#464646" stroke-width="1.100"/><path d="M827.7 894.1L1186.9 578.1" stroke="#464646" stroke-width="1.100"/><path d="M786.8 471.1L1212.0 610.4" stroke="#464646" stroke-width="1.100"/><path d="M855.0 910.7L1208.7 585.0" stroke="#464646" stroke-width="1.100"/><path d="M799.2 465.6L1221.6 601.0" stroke="#464646" stroke-width="1.100"/><path d="M883.3 928.0L1231.0 592.0" stroke="#464646" stroke-width="1.100"/><path d="M811.4 460.2L1231.0 592.0" stroke="#464646" stroke-width="1.100"/></g><path d="M521.9 353.5L705.4 303.6L873.5 341.2L695.1 405.9z" fill="#8c8c8c"/><path d="M521.9 353.5L695.1 405.9L713.0 648.8L555.0 572.5z" fill="#858585"/><path d="M695.1 405.9L873.5 341.2L871.5 559.4L713.0 648.8z" fill="#767676"/><path d="M551.8 362.5L590.0 350.0M758.5 382.9L792.2 370.7M788.2 349.5L800.0 340.0M751.7 314.0L819.9 329.2M584.5 372.4L622.9 370.2M735.7 367.3L792.2 370.7M819.9 329.2L800.0 340.0M680.3 363.3L735.7 367.3M590.0 350.0L600.0 336.0M873.5 341.2L842.7 352.4M788.2 349.5L700.0 345.0M703.1 319.8L671.4 320.7M658.5 380.1L697.1 379.2M584.5 372.4L654.1 393.5M819.9 329.2L787.2 330.6M628.8 348.5L600.0 336.0M680.3 363.3L700.0 345.0M650.6 333.6L700.0 345.0M788.2 349.5L792.2 370.7M705.4 303.6L751.7 314.0M684.3 332.6L703.1 319.8M787.2 330.6L760.0 330.0M751.7 314.0L760.0 330.0M695.1 405.9L716.0 398.3M873.5 341.2L845.0 343.0M735.7 336.6L800.0 340.0M684.3 332.6L671.4 320.7M719.9 322.7L760.0 330.0M680.3 363.3L658.5 380.1M628.8 348.5L590.0 350.0M584.5 372.4L551.8 362.5M584.5 372.4L590.0 350.0M543.3 347.7L600.0 336.0M751.7 314.0L703.1 319.8M735.7 336.6L719.9 322.7M622.9 370.2L590.0 350.0M656.2 317.0L671.4 320.7M703.1 319.8L719.9 322.7M620.2 326.8L650.6 333.6M658.5 380.1L584.5 372.4M792.2 370.7L824.9 358.8M628.8 348.5L700.0 345.0M697.1 379.2L654.1 393.5M705.4 303.6L689.0 308.1M824.9 358.8L842.7 352.4M788.2 349.5L842.7 352.4M658.5 380.1L622.9 370.2M543.3 347.7L551.8 362.5M684.3 332.6L700.0 345.0M735.7 367.3L788.2 349.5M543.3 347.7L590.0 350.0M654.1 393.5L716.0 398.3M650.6 333.6L600.0 336.0M842.7 352.4L845.0 343.0M758.5 382.9L734.8 391.5M697.1 379.2L734.8 391.5M620.2 326.8L656.2 317.0M684.3 332.6L719.9 322.7M735.7 336.6L700.0 345.0M521.9 353.5L543.3 347.7M716.0 398.3L734.8 391.5M650.6 333.6L671.4 320.7M787.2 330.6L800.0 340.0M680.3 363.3L622.9 370.2M788.2 349.5L845.0 343.0M751.7 314.0L787.2 330.6M628.8 348.5L622.9 370.2M521.9 353.5L551.8 362.5M620.2 326.8L600.0 336.0M819.9 329.2L845.0 343.0M689.0 308.1L703.1 319.8M800.0 340.0L845.0 343.0M684.3 332.6L735.7 336.6M620.2 326.8L671.4 320.7M751.7 314.0L719.9 322.7M697.1 379.2L735.7 367.3M695.1 405.9L654.1 393.5M697.1 379.2L758.5 382.9M543.3 347.7L620.2 326.8M689.0 308.1L671.4 320.7M735.7 336.6L760.0 330.0M788.2 349.5L824.9 358.8M628.8 348.5L650.6 333.6M658.5 380.1L654.1 393.5M735.7 367.3L758.5 382.9M656.2 317.0L689.0 308.1M735.7 336.6L788.2 349.5M697.1 379.2L716.0 398.3M760.0 330.0L800.0 340.0M628.8 348.5L680.3 363.3M650.6 333.6L684.3 332.6M873.5 341.2L819.9 329.2M735.7 367.3L700.0 345.0M680.3 363.3L697.1 379.2M689.0 308.1L751.7 314.0" stroke="#ffffff" stroke-width="1.0" fill="none" stroke-opacity="0.95" stroke-linecap="butt" shape-rendering="crispEdges"/><path d="M745.1 312.5L785.9 325.3M785.9 325.3L795.8 328.0M850.5 349.6L826.3 330.6M587.8 335.6L677.8 311.1M850.5 349.6L790.7 357.7M677.8 311.1L668.2 328.8M521.9 353.5L587.8 335.6M587.8 335.6L634.4 328.8M662.2 356.4L785.9 325.3M677.8 311.1L685.6 326.3M873.5 341.2L850.5 349.6M654.3 340.3L685.6 326.3M654.3 340.3L668.2 328.8M826.3 330.6L790.7 357.7M826.3 330.6L795.8 328.0M745.1 312.5L685.6 326.3M705.4 303.6L677.8 311.1M705.4 303.6L745.1 312.5M668.2 328.8L634.4 328.8M587.8 335.6L654.3 340.3M662.2 356.4L654.3 340.3M521.9 353.5L621.7 383.7M521.9 353.5L662.2 356.4M873.5 341.2L826.3 330.6M695.1 405.9L850.5 349.6M795.8 328.0L790.7 357.7M745.1 312.5L826.3 330.6M826.3 330.6L785.9 325.3M621.7 383.7L662.2 356.4M785.9 325.3L685.6 326.3M668.2 328.8L685.6 326.3M587.8 335.6L662.2 356.4M695.1 405.9L621.7 383.7M677.8 311.1L634.4 328.8M654.3 340.3L785.9 325.3M662.2 356.4L795.8 328.0M662.2 356.4L790.7 357.7M654.3 340.3L634.4 328.8M695.1 405.9L662.2 356.4M695.1 405.9L790.7 357.7M745.1 312.5L677.8 311.1" stroke="#ffffff" stroke-width="1.0" fill="none" stroke-dasharray="7 5" stroke-opacity="0.95" stroke-linecap="butt" shape-rendering="crispEdges"/><path d="M660.3 445.6L697.1 433.2M637.5 551.3L645.0 615.9M595.0 555.0L612.0 600.0M713.0 648.8L690.0 600.0M525.7 378.6L529.0 400.3M697.1 433.2L704.5 534.1M586.6 373.1L554.5 386.0M601.3 515.8L610.0 559.3M704.5 534.1L670.0 500.0M605.2 403.1L625.3 433.7M695.1 405.9L676.0 426.2M561.2 433.7L580.6 463.5M654.3 393.6L605.2 403.1M525.7 378.6L554.5 386.0M637.5 551.3L610.0 559.3M645.0 615.9L665.0 590.0M561.2 433.7L529.0 400.3M610.0 559.3L612.0 600.0M586.6 373.1L590.3 421.7M546.1 513.5L577.5 546.3M521.9 353.5L525.7 378.6M676.0 426.2L660.3 445.6M595.0 555.0L577.5 546.3M646.9 488.1L670.0 500.0M567.9 479.9L575.5 524.3M637.5 551.3L680.0 560.0M713.0 648.8L680.0 632.8M665.0 590.0L690.0 600.0M542.3 488.4L575.5 524.3M590.3 421.7L561.2 433.7M575.5 524.3L595.0 555.0M625.3 433.7L646.9 488.1M555.0 572.5L549.3 534.7M660.3 445.6L646.9 488.1M532.6 424.6L537.2 454.7M601.3 515.8L595.0 555.0M575.5 524.3L577.5 546.3M709.8 605.4L680.0 560.0M680.0 632.8L690.0 600.0M554.5 386.0L529.0 400.3M713.0 648.8L709.8 605.4M590.3 421.7L580.6 463.5M586.6 373.1L605.2 403.1M709.8 605.4L690.0 600.0M532.6 424.6L561.2 433.7M561.2 433.7L567.9 479.9M706.3 557.5L709.8 605.4M595.0 555.0L610.0 559.3M646.9 488.1L630.0 520.0M654.3 393.6L676.0 426.2M575.5 524.3L601.3 515.8M590.3 421.7L646.9 488.1M625.3 433.7L660.3 445.6M546.1 513.5L549.3 534.7M580.6 463.5L567.9 479.9M554.5 386.0L590.3 421.7M577.5 546.3L549.3 534.7M542.3 488.4L546.1 513.5M680.0 560.0L690.0 600.0M676.0 426.2L697.1 433.2M586.6 373.1L654.3 393.6M704.5 534.1L680.0 560.0M521.9 353.5L552.3 362.7M695.1 405.9L697.1 433.2M680.0 560.0L670.0 500.0M532.6 424.6L529.0 400.3M590.3 421.7L625.3 433.7M704.5 534.1L706.3 557.5M552.3 362.7L554.5 386.0M567.9 479.9L537.2 454.7M580.6 463.5L601.3 515.8M680.0 632.8L665.0 590.0M577.5 546.3L612.0 600.0M555.0 572.5L612.0 600.0M542.3 488.4L567.9 479.9M580.6 463.5L630.0 520.0M706.3 557.5L680.0 560.0M646.9 488.1L680.0 560.0M542.3 488.4L537.2 454.7M561.2 433.7L537.2 454.7M610.0 559.3L645.0 615.9M660.3 445.6L670.0 500.0M695.1 405.9L654.3 393.6M697.1 433.2L670.0 500.0M612.0 600.0L645.0 615.9M654.3 393.6L625.3 433.7M552.3 362.7L586.6 373.1M637.5 551.3L665.0 590.0M567.9 479.9L601.3 515.8M521.9 353.5L554.5 386.0M555.0 572.5L577.5 546.3M601.3 515.8L630.0 520.0M680.0 560.0L665.0 590.0M654.3 393.6L660.3 445.6M645.0 615.9L680.0 632.8M637.5 551.3L630.0 520.0M575.5 524.3L546.1 513.5M601.3 515.8L637.5 551.3M580.6 463.5L646.9 488.1M554.5 386.0L561.2 433.7M605.2 403.1L590.3 421.7M680.0 560.0L630.0 520.0" stroke="#ffffff" stroke-width="1.0" fill="none" stroke-opacity="0.95" stroke-linecap="butt" shape-rendering="crispEdges"/><path d="M720.0 475.0L737.5 416.2M781.2 566.2L840.0 500.0M704.5 534.0L725.0 549.5M842.7 352.4L842.7 377.2M773.8 403.7L792.2 370.7M727.5 572.5L730.0 616.2M742.5 516.2L781.2 566.2M873.1 388.1L860.0 450.0M871.5 559.4L860.0 450.0M730.0 616.2L709.8 605.6M713.0 648.8L709.8 605.6M757.5 460.0L800.0 470.0M742.5 516.2L747.5 584.5M873.5 341.2L873.1 388.1M871.5 559.4L840.0 500.0M742.5 516.2L800.0 470.0M800.0 470.0L840.0 500.0M873.5 341.2L854.6 398.0M747.5 584.5L766.3 597.5M757.5 460.0L742.5 516.2M824.9 358.8L842.7 352.4M717.5 425.0L737.5 416.2M805.0 417.8L830.0 440.0M781.2 566.2L800.0 520.0M842.7 377.2L830.0 440.0M720.0 475.0L697.1 432.5M792.2 370.7L805.0 417.8M842.7 352.4L826.8 382.1M757.5 460.0L737.5 416.2M717.5 425.0L734.8 391.5M717.5 425.0L697.1 432.5M716.0 398.3L734.8 391.5M766.3 597.5L748.8 628.6M871.5 559.4L766.3 597.5M704.5 534.0L697.1 432.5M742.5 516.2L725.0 549.5M826.8 382.1L842.7 377.2M873.5 341.2L842.7 352.4M716.0 398.3L697.1 432.5M854.6 398.0L860.0 450.0M734.8 391.5L792.2 370.7M713.0 648.8L730.0 616.2M800.0 470.0L830.0 440.0M742.5 516.2L727.5 572.5M873.5 341.2L842.7 377.2M860.0 450.0L840.0 500.0M717.5 425.0L720.0 475.0M792.2 370.7L824.9 358.8M730.0 616.2L748.8 628.6M713.0 648.8L748.8 628.6M830.0 440.0L860.0 450.0M773.8 403.7L737.5 416.2M704.5 534.0L709.8 605.6M781.2 566.2L747.5 584.5M773.8 403.7L805.0 417.8M800.0 470.0L800.0 520.0M695.1 405.9L697.1 432.5M871.5 559.4L873.1 388.1M720.0 475.0L704.5 534.0M842.7 377.2L854.6 398.0M757.5 460.0L720.0 475.0M792.2 370.7L826.8 382.1M773.8 403.7L734.8 391.5M805.0 417.8L800.0 470.0M757.5 460.0L805.0 417.8M871.5 559.4L781.2 566.2M747.5 584.5L730.0 616.2M717.5 425.0L716.0 398.3M727.5 572.5L709.8 605.6M854.6 398.0L830.0 440.0M826.8 382.1L805.0 417.8M737.5 416.2L734.8 391.5M747.5 584.5L748.8 628.6M725.0 549.5L727.5 572.5M830.0 440.0L840.0 500.0M695.1 405.9L716.0 398.3M871.5 559.4L748.8 628.6M720.0 475.0L742.5 516.2M800.0 520.0L840.0 500.0M826.8 382.1L830.0 440.0M873.1 388.1L854.6 398.0M742.5 516.2L800.0 520.0M824.9 358.8L826.8 382.1M757.5 460.0L773.8 403.7M781.2 566.2L766.3 597.5M725.0 549.5L709.8 605.6M727.5 572.5L747.5 584.5M742.5 516.2L704.5 534.0" stroke="#ffffff" stroke-width="1.0" fill="none" stroke-opacity="0.95" stroke-linecap="butt" shape-rendering="crispEdges"/><path d="M521.9 353.5L705.4 303.6M705.4 303.6L873.5 341.2M873.5 341.2L871.5 559.4M871.5 559.4L713.0 648.8M713.0 648.8L555.0 572.5M555.0 572.5L521.9 353.5M521.9 353.5L695.1 405.9M695.1 405.9L873.5 341.2M695.1 405.9L713.0 648.8" stroke="#ffffff" stroke-width="1.0" fill="none" stroke-opacity="1.0" stroke-linecap="butt" shape-rendering="crispEdges"/><path d="M776.5 430.5L951.0 359.5L1192.4 414.0L1038.0 508.0z" fill="#8c8c8c"/><path d="M776.5 430.5L1038.0 508.0L1018.0 795.0L787.0 684.5z" fill="#858585"/><path d="M1038.0 508.0L1192.4 414.0L1158.5 660.8L1018.0 795.0z" fill="#767676"/><path d="M1166.0 430.1L1150.0 420.0M1192.4 414.0L1179.0 422.2M928.7 432.9L970.9 472.7M1166.0 430.1L1179.0 422.2M1041.7 380.0L1026.0 386.0M1114.9 396.5L1125.6 410.6M1136.7 447.9L1166.0 430.1M871.8 391.7L987.3 421.2M1136.7 447.9L1105.7 466.8M996.7 400.1L1047.1 394.2M847.1 451.4L925.1 474.5M1071.7 418.8L1095.1 449.3M776.5 430.5L847.1 451.4M1071.7 418.8L1150.0 420.0M1047.1 394.2L1026.0 386.0M925.1 474.5L970.9 472.7M1125.6 410.6L1085.0 400.0M981.0 491.1L1017.8 471.6M1192.4 414.0L1125.6 410.6M1036.5 462.2L1105.7 466.8M987.3 421.2L1071.7 418.8M987.3 421.2L1003.7 413.0M1017.8 471.6L970.9 472.7M928.7 432.9L861.9 427.0M1017.8 471.6L1054.1 498.2M1073.0 486.7L1054.1 498.2M928.7 432.9L1036.5 462.2M871.8 391.7L936.8 365.3M1095.1 449.3L1105.7 466.8M1095.1 449.3L1036.5 462.2M871.8 391.7L996.7 400.1M951.0 359.5L1041.7 380.0M1114.9 396.5L1085.0 400.0M1136.7 447.9L1095.1 449.3M996.7 400.1L987.3 421.2M1136.7 447.9L1150.0 420.0M996.7 400.1L1026.0 386.0M951.0 359.5L1026.0 386.0M925.1 474.5L981.0 491.1M925.1 474.5L928.7 432.9M1071.7 418.8L1003.7 413.0M936.8 365.3L1026.0 386.0M776.5 430.5L871.8 391.7M1071.7 418.8L1125.6 410.6M1192.4 414.0L1114.9 396.5M1047.1 394.2L1003.7 413.0M1179.0 422.2L1150.0 420.0M776.5 430.5L861.9 427.0M1073.0 486.7L1105.7 466.8M981.0 491.1L970.9 472.7M987.3 421.2L928.7 432.9M1073.0 486.7L1036.5 462.2M1017.8 471.6L1036.5 462.2M1041.7 380.0L1114.9 396.5M981.0 491.1L1054.1 498.2M987.3 421.2L1036.5 462.2M1038.0 508.0L1054.1 498.2M1041.7 380.0L1047.1 394.2M951.0 359.5L936.8 365.3M1136.7 447.9L1071.7 418.8M871.8 391.7L928.7 432.9M1125.6 410.6L1150.0 420.0M1041.7 380.0L1085.0 400.0M996.7 400.1L1003.7 413.0M936.8 365.3L996.7 400.1M871.8 391.7L861.9 427.0M1071.7 418.8L1047.1 394.2M847.1 451.4L928.7 432.9M847.1 451.4L861.9 427.0M1071.7 418.8L1085.0 400.0M1038.0 508.0L981.0 491.1M1073.0 486.7L1017.8 471.6M1047.1 394.2L1085.0 400.0M987.3 421.2L1095.1 449.3M1036.5 462.2L970.9 472.7M1192.4 414.0L1150.0 420.0" stroke="#43ffa3" stroke-width="1.0" fill="none" stroke-opacity="1.0" stroke-linecap="butt" shape-rendering="crispEdges"/><path d="M1001.6 658.6L1024.7 699.4M846.9 451.4L871.3 546.0M946.2 631.8L872.3 725.3M946.2 631.8L973.9 613.3M940.0 757.7L985.0 720.0M787.0 684.5L872.3 725.3M922.9 473.9L973.9 613.3M985.0 720.0L1003.0 760.0M946.2 631.8L985.0 720.0M1027.3 661.4L1030.2 619.7M922.9 473.9L1000.0 560.0M871.3 546.0L871.0 574.0M1038.0 508.0L978.7 490.4M1030.2 619.7L1010.0 620.0M1018.0 795.0L1003.0 760.0M777.7 458.7L824.5 530.4M1021.6 743.6L1003.0 760.0M1021.6 743.6L1024.7 699.4M846.9 451.4L922.9 473.9M1001.6 658.6L985.0 720.0M922.9 473.9L978.7 490.4M946.2 631.8L940.0 757.7M922.9 473.9L871.3 546.0M1027.3 661.4L1001.6 658.6M946.2 631.8L1001.6 658.6M1024.7 699.4L985.0 720.0M783.1 590.5L871.0 574.0M871.3 546.0L824.5 530.4M776.5 430.5L777.7 458.7M1027.3 661.4L1010.0 620.0M824.5 530.4L871.0 574.0M871.3 546.0L973.9 613.3M776.5 430.5L846.9 451.4M871.0 574.0L872.3 725.3M1038.0 508.0L1033.4 574.5M1010.0 620.0L1000.0 560.0M872.3 725.3L940.0 757.7M973.9 613.3L1000.0 560.0M1021.6 743.6L985.0 720.0M978.7 490.4L1000.0 560.0M846.9 451.4L777.7 458.7M940.0 757.7L1003.0 760.0M1001.6 658.6L1010.0 620.0M846.9 451.4L824.5 530.4M787.0 684.5L783.1 590.5M871.3 546.0L946.2 631.8M783.1 590.5L824.5 530.4M783.1 590.5L872.3 725.3M1027.3 661.4L1024.7 699.4M1033.4 574.5L1030.2 619.7M871.0 574.0L946.2 631.8M1030.2 619.7L1000.0 560.0M1033.4 574.5L1000.0 560.0M973.9 613.3L1001.6 658.6M1018.0 795.0L1021.6 743.6M1018.0 795.0L940.0 757.7M1038.0 508.0L1000.0 560.0M777.7 458.7L783.1 590.5M973.9 613.3L1010.0 620.0" stroke="#43ffa3" stroke-width="1.0" fill="none" stroke-opacity="1.0" stroke-linecap="butt" shape-rendering="crispEdges"/><path d="M1156.5 515.0L1185.3 465.5M1192.4 414.0L1163.4 461.3M1051.5 591.5L1060.0 560.0M1092.9 474.6L1072.3 518.4M1120.0 613.0L1143.0 614.6M1043.2 702.4L1060.0 740.0M1083.0 566.2L1051.5 591.5M1083.0 566.2L1120.7 510.4M1120.7 510.4L1146.1 493.1M1060.0 740.0L1075.0 700.0M1155.4 604.6L1165.0 580.0M1085.4 687.7L1140.0 638.5M1109.5 464.5L1105.2 497.7M1046.0 649.2L1070.0 620.0M1085.4 687.7L1075.0 700.0M1027.1 664.7L1051.5 591.5M1140.0 638.5L1145.7 673.0M1124.5 455.3L1120.7 510.4M1021.5 744.8L1033.6 780.1M1163.4 461.3L1156.5 515.0M1043.2 702.4L1070.0 620.0M1136.2 576.2L1110.0 560.0M1033.3 575.2L1055.6 530.0M1140.0 638.5L1095.9 720.6M1145.7 673.0L1134.3 683.9M1093.0 610.0L1085.4 687.7M1140.6 445.6L1135.7 478.1M1075.0 700.0L1070.0 620.0M1120.0 613.0L1110.0 560.0M1046.0 649.2L1027.1 664.7M1083.0 566.2L1093.0 610.0M1092.9 474.6L1109.5 464.5M1058.7 495.4L1072.3 518.4M1021.5 744.8L1060.0 740.0M1046.0 649.2L1043.2 702.4M1152.3 627.7L1140.0 638.5M1055.6 530.0L1060.0 560.0M1140.6 445.6L1163.4 461.3M1051.5 591.5L1070.0 620.0M1083.0 566.2L1060.0 560.0M1143.0 614.6L1165.0 580.0M1135.7 478.1L1163.4 461.3M1033.6 780.1L1060.0 740.0M1109.5 464.5L1124.5 455.3M1120.7 510.4L1128.8 531.1M1124.5 455.3L1140.6 445.6M1174.8 541.9L1165.0 580.0M1156.5 515.0L1174.8 541.9M1038.0 508.0L1055.6 530.0M1152.3 627.7L1165.0 580.0M1058.7 495.4L1076.1 484.8M1072.3 518.4L1055.6 530.0M1092.9 474.6L1105.2 497.7M1033.3 575.2L1027.1 664.7M1043.2 702.4L1075.0 700.0M1095.9 720.6L1033.6 780.1M1146.1 493.1L1163.4 461.3M1192.4 414.0L1140.6 445.6M1120.7 510.4L1110.0 560.0M1072.3 518.4L1105.2 497.7M1128.8 531.1L1110.0 560.0M1076.1 484.8L1092.9 474.6M1046.0 649.2L1051.5 591.5M1136.2 576.2L1156.5 515.0M1095.9 720.6L1060.0 740.0M1134.3 683.9L1095.9 720.6M1120.0 613.0L1140.0 638.5M1105.2 497.7L1120.7 510.4M1038.0 508.0L1058.7 495.4M1146.1 493.1L1156.5 515.0M1083.0 566.2L1110.0 560.0M1136.2 576.2L1120.0 613.0M1021.5 744.8L1043.2 702.4M1085.4 687.7L1095.9 720.6M1136.2 576.2L1165.0 580.0M1093.0 610.0L1110.0 560.0M1033.3 575.2L1035.4 544.8M1083.0 566.2L1105.2 497.7M1158.5 660.8L1152.3 627.7M1120.7 510.4L1135.7 478.1M1018.0 795.0L1033.6 780.1M1083.0 566.2L1070.0 620.0M1158.5 660.8L1174.8 541.9M1033.3 575.2L1060.0 560.0M1135.7 478.1L1146.1 493.1M1076.1 484.8L1072.3 518.4M1136.2 576.2L1174.8 541.9M1033.3 575.2L1051.5 591.5M1093.0 610.0L1070.0 620.0M1152.3 627.7L1145.7 673.0M1155.4 604.6L1140.0 638.5M1124.5 455.3L1105.2 497.7M1143.0 614.6L1155.4 604.6M1185.3 465.5L1174.8 541.9M1038.0 508.0L1035.4 544.8M1140.0 638.5L1134.3 683.9M1128.8 531.1L1156.5 515.0M1124.5 455.3L1135.7 478.1M1027.1 664.7L1021.5 744.8M1192.4 414.0L1185.3 465.5M1136.2 576.2L1128.8 531.1M1158.5 660.8L1165.0 580.0M1058.7 495.4L1055.6 530.0M1120.0 613.0L1085.4 687.7M1152.3 627.7L1155.4 604.6M1158.5 660.8L1145.7 673.0M1146.1 493.1L1128.8 531.1M1027.1 664.7L1043.2 702.4M1072.3 518.4L1060.0 560.0M1095.9 720.6L1075.0 700.0M1093.0 610.0L1075.0 700.0M1163.4 461.3L1185.3 465.5M1055.6 530.0L1035.4 544.8M1143.0 614.6L1140.0 638.5M1083.0 566.2L1072.3 518.4M1018.0 795.0L1021.5 744.8M1136.2 576.2L1143.0 614.6M1093.0 610.0L1120.0 613.0" stroke="#43ffa3" stroke-width="1.0" fill="none" stroke-opacity="1.0" stroke-linecap="butt" shape-rendering="crispEdges"/><path d="M776.5 430.5L951.0 359.5M951.0 359.5L1192.4 414.0M1192.4 414.0L1158.5 660.8M1158.5 660.8L1018.0 795.0M1018.0 795.0L787.0 684.5M787.0 684.5L776.5 430.5M776.5 430.5L1038.0 508.0M1038.0 508.0L1192.4 414.0M1038.0 508.0L1018.0 795.0" stroke="#43ffa3" stroke-width="1.0" fill="none" stroke-opacity="1.0" stroke-linecap="butt" shape-rendering="crispEdges"/><path d="M939.2 512.300L949.800 506.500L949.800 521L939.200 527.300z" fill="#e06060" fill-opacity=".55" stroke="#f04040" stroke-width="1"/><path d="M1037.300 501.700L1053.300 506.300L1052.700 521.900L1037.300 517.300z" fill="#5a5ad8" fill-opacity=".6" stroke="#3838ff" stroke-width="1"/><path d="M990.200 601.700L1000.800 596L1013.800 601.700L1004.600 608.500z" fill="#60c860" fill-opacity=".6" stroke="#50e050" stroke-width="1"/><path d="M982.500 537.300L986.200 470" stroke="#00ee00" stroke-width="1.300"/><path d="M986.700 450.800L982 472.500L991.500 472.500z" fill="#00ee00"/><ellipse cx="986.700" cy="472.500" rx="4.800" ry="1.800" fill="#00ee00"/><path d="M970.600 562.300L931 588" stroke="#0000ee" stroke-width="1.300"/><path d="M914.200 598.800L928 583L935 591.500z" fill="#0000ee"/><ellipse cx="931.500" cy="587.300" rx="3" ry="5" transform="rotate(-20 931.500 587.300)" fill="#0000ee"/><path d="M998.400 561.600L1060 581" stroke="#ee0000" stroke-width="1.300"/><path d="M1080 588.400L1059.500 575L1057 585.500z" fill="#ee0000"/><ellipse cx="1058.300" cy="580.200" rx="2.600" ry="5.200" transform="rotate(12 1058.300 580.200)" fill="#ee0000"/><rect x="971" y="545" width="21" height="21" fill="none" stroke="#f4f020" stroke-width="1.200"/><rect x="981" y="555" width="1.200" height="1.200" fill="#f4f020"/><g shape-rendering="crispEdges"><path d="M343.800 869V856" stroke="#00ee00" stroke-width="1.600"/><path d="M344 869.500L353.600 873.700" stroke="#ee0000" stroke-width="1.300"/><path d="M343.500 869.500L335.300 874.700" stroke="#0000ee" stroke-width="1.300"/></g></g></svg>
<span style="top:843.00px;font-size:10px;line-height:13px;color:#10e010;white-space:pre;font-weight:bold;left:340.5px;">y</span>
<span style="top:862.00px;font-size:10px;line-height:13px;color:#ee1010;white-space:pre;font-weight:bold;left:353.5px;">x</span>
<span style="top:863.00px;font-size:10px;line-height:13px;color:#1010ee;white-space:pre;font-weight:bold;left:331px;">z</span>
<span style="top:876.00px;font-size:9.5px;line-height:13px;color:#eeeeee;white-space:pre;font-weight:bold;font-family:'DejaVu Sans', 'Liberation Sans', sans-serif;letter-spacing:-0.478px;left:854px;">persp</span>
<span style="top:194.00px;font-size:10px;line-height:13px;color:#f2f2f2;white-space:pre;font-weight:bold;letter-spacing:0.167px;left:333px;">Verts:</span>
<span style="top:194.00px;font-size:10px;line-height:13px;color:#f2f2f2;white-space:pre;font-weight:bold;letter-spacing:0.338px;left:424.3px;">1508</span>
<span style="top:194.00px;font-size:10px;line-height:13px;color:#f2f2f2;white-space:pre;font-weight:bold;letter-spacing:0.304px;left:495.3px;">304</span>
<span style="top:194.00px;font-size:10px;line-height:13px;color:#f2f2f2;white-space:pre;font-weight:bold;letter-spacing:0.237px;left:572.2px;">0</span>
<span style="top:214.00px;font-size:10px;line-height:13px;color:#f2f2f2;white-space:pre;font-weight:bold;letter-spacing:0.026px;left:333px;">Edges:</span>
<span style="top:214.00px;font-size:10px;line-height:13px;color:#f2f2f2;white-space:pre;font-weight:bold;letter-spacing:0.338px;left:424.3px;">3300</span>
<span style="top:214.00px;font-size:10px;line-height:13px;color:#f2f2f2;white-space:pre;font-weight:bold;letter-spacing:0.304px;left:495.3px;">900</span>
<span style="top:214.00px;font-size:10px;line-height:13px;color:#f2f2f2;white-space:pre;font-weight:bold;letter-spacing:0.237px;left:572.2px;">0</span>
<span style="top:234.00px;font-size:10px;line-height:13px;color:#f2f2f2;white-space:pre;font-weight:bold;letter-spacing:0.185px;left:333px;">Faces:</span>
<span style="top:234.00px;font-size:10px;line-height:13px;color:#f2f2f2;white-space:pre;font-weight:bold;letter-spacing:0.338px;left:424.3px;">1800</span>
<span style="top:234.00px;font-size:10px;line-height:13px;color:#f2f2f2;white-space:pre;font-weight:bold;letter-spacing:0.304px;left:495.3px;">600</span>
<span style="top:234.00px;font-size:10px;line-height:13px;color:#f2f2f2;white-space:pre;font-weight:bold;letter-spacing:0.237px;left:572.2px;">0</span>
<span style="top:254.00px;font-size:10px;line-height:13px;color:#f2f2f2;white-space:pre;font-weight:bold;letter-spacing:-0.125px;left:333px;">Tris:</span>
<span style="top:254.00px;font-size:10px;line-height:13px;color:#f2f2f2;white-space:pre;font-weight:bold;letter-spacing:0.338px;left:424.3px;">3000</span>
<span style="top:254.00px;font-size:10px;line-height:13px;color:#f2f2f2;white-space:pre;font-weight:bold;letter-spacing:0.304px;left:495.3px;">600</span>
<span style="top:254.00px;font-size:10px;line-height:13px;color:#f2f2f2;white-space:pre;font-weight:bold;letter-spacing:0.237px;left:572.2px;">0</span>
<span style="top:274.00px;font-size:10px;line-height:13px;color:#f2f2f2;white-space:pre;font-weight:bold;letter-spacing:-0.024px;left:333px;">UVs:</span>
<span style="top:274.00px;font-size:10px;line-height:13px;color:#f2f2f2;white-space:pre;font-weight:bold;letter-spacing:0.338px;left:424.3px;">1724</span>
<span style="top:274.00px;font-size:10px;line-height:13px;color:#f2f2f2;white-space:pre;font-weight:bold;letter-spacing:0.304px;left:495.3px;">382</span>
<span style="top:274.00px;font-size:10px;line-height:13px;color:#f2f2f2;white-space:pre;font-weight:bold;letter-spacing:0.237px;left:572.2px;">0</span>
<div style="left:1442px;top:148px;width:478px;height:753px;background:#444444;"></div>
<span style="top:153.00px;font-size:12px;line-height:16px;color:#d2d2d2;white-space:pre;letter-spacing:-0.297px;left:1452.0px;">List</span>
<span style="top:153.00px;font-size:12px;line-height:16px;color:#d2d2d2;white-space:pre;letter-spacing:-0.400px;left:1484.0px;">Selected</span>
<span style="top:153.00px;font-size:12px;line-height:16px;color:#d2d2d2;white-space:pre;letter-spacing:-0.537px;left:1542.0px;">Focus</span>
<span style="top:153.00px;font-size:12px;line-height:16px;color:#d2d2d2;white-space:pre;letter-spacing:0.080px;left:1586.5px;">Attributes</span>
<span style="top:153.00px;font-size:12px;line-height:16px;color:#d2d2d2;white-space:pre;letter-spacing:0.117px;left:1652.0px;">Show</span>
<span style="top:153.00px;font-size:12px;line-height:16px;color:#d2d2d2;white-space:pre;letter-spacing:0.078px;left:1696.5px;">Help</span>
<div style="left:1449px;top:186px;width:448px;height:18px;background:#373737;"></div>
<div style="left:1451px;top:187px;width:94px;height:17px;background:#444444;border-radius:3px 3px 0 0;"></div>
<span style="top:189.00px;font-size:12px;line-height:16px;color:#eeeeee;white-space:pre;letter-spacing:-0.642px;left:1461.0px;">pCube1_LOD1</span>
<div style="left:1547px;top:188px;width:127.5px;height:16px;background:#3c3c3c;border:1px solid #2e2e2e;border-bottom:none;border-radius:3px 3px 0 0;"></div>
<span style="top:189.00px;font-size:12px;line-height:16px;color:#a3a3a3;white-space:pre;letter-spacing:-0.579px;left:1558.0px;">pCube1_LODShape1</span>
<div style="left:1676px;top:188px;width:127px;height:16px;background:#3c3c3c;border:1px solid #2e2e2e;border-bottom:none;border-radius:3px 3px 0 0;"></div>
<span style="top:189.00px;font-size:12px;line-height:16px;color:#a3a3a3;white-space:pre;letter-spacing:0.039px;left:1686.5px;">initialShadingGroup</span>
<div style="left:1805px;top:188px;width:67px;height:16px;background:#3c3c3c;border:1px solid #2e2e2e;border-bottom:none;border-radius:3px 3px 0 0;"></div>
<span style="top:189.00px;font-size:12px;line-height:16px;color:#a3a3a3;white-space:pre;letter-spacing:-0.273px;left:1816.0px;">lambert1</span>
<span style="top:238.00px;font-size:12px;line-height:16px;color:#d2d2d2;white-space:pre;letter-spacing:-0.152px;left:1541px;">transform:</span>
<div style="left:1600px;top:235px;width:154px;height:22px;background:#2b2b2b;border-radius:3px;"></div>
<span style="top:238.00px;font-size:12px;line-height:16px;color:#e4e4e4;white-space:pre;letter-spacing:-0.688px;left:1605px;">pCube1_LOD1</span>
<svg style="left:1766px;top:226px;" width="18" height="15" viewBox="0 0 18 15"><rect x="4.500" y="1.500" width="12" height="12" fill="none" stroke="#c8c8c8" stroke-width="1.300"/><rect x="2" y="4" width="5" height="7" fill="#444"/><path d="M1 4l5 3.500-5 3.500z" fill="#c8c8c8"/></svg>
<svg style="left:1766px;top:249px;" width="18" height="15" viewBox="0 0 18 15"><rect x="1.500" y="1.500" width="12" height="12" fill="none" stroke="#c8c8c8" stroke-width="1.300"/><rect x="11" y="4" width="5" height="7" fill="#444"/><path d="M12 4l5 3.500-5 3.500z" fill="#c8c8c8"/></svg>
<div style="left:1795px;top:214px;width:70px;height:20px;background:#5d5d5d;border-radius:2px;"></div>
<div style="top:217.00px;font-size:12px;line-height:16px;color:#eeeeee;white-space:pre;letter-spacing:-0.637px;left:1329.68px;width:1000px;text-align:center;"><span style="position:static">Focus</span></div>
<div style="left:1795px;top:236px;width:70px;height:20px;background:#5d5d5d;border-radius:2px;"></div>
<div style="top:239.00px;font-size:12px;line-height:16px;color:#eeeeee;white-space:pre;letter-spacing:-0.741px;left:1329.63px;width:1000px;text-align:center;"><span style="position:static">Presets</span></div>
<div style="left:1795px;top:258px;width:35px;height:20px;background:#5d5d5d;border-radius:2px;"></div>
<div style="top:261.00px;font-size:12px;line-height:16px;color:#eeeeee;white-space:pre;letter-spacing:-0.383px;left:1312.31px;width:1000px;text-align:center;"><span style="position:static">Show</span></div>
<div style="left:1832px;top:258px;width:35px;height:20px;background:#5d5d5d;border-radius:2px;"></div>
<div style="top:261.00px;font-size:12px;line-height:16px;color:#eeeeee;white-space:pre;letter-spacing:-0.297px;left:1349.35px;width:1000px;text-align:center;"><span style="position:static">Hide</span></div>
<div style="left:1454px;top:295px;width:438px;height:20px;background:#5d5d5d;border-radius:2px;"></div>
<div style="left:1455px;top:315px;width:436px;height:2px;background:#3d3d3d;"></div>
<svg style="left:1461px;top:301px;" width="12" height="8" viewBox="0 0 12 8"><path d="M0 0h11.500l-5.750 6.500z" fill="#f0f0f0"/></svg>
<span style="top:298.00px;font-size:12px;line-height:16px;color:#cfcfcf;white-space:pre;font-weight:bold;letter-spacing:-0.512px;left:1487px;">Transform Attributes</span>
<div style="left:1456px;top:317px;width:435px;height:150px;background:#494949;"></div>
<span style="top:320.00px;font-size:12px;line-height:16px;color:#d2d2d2;white-space:pre;letter-spacing:-0.342px;right:321.34px;">Translate</span>
<div style="left:1607px;top:319px;width:68px;height:18px;background:#2b2b2b;border-radius:2px;"></div>
<span style="top:321.00px;font-size:12px;line-height:16px;color:#e4e4e4;white-space:pre;letter-spacing:-0.606px;left:1612px;">6.946</span>
<div style="left:1679px;top:319px;width:68px;height:18px;background:#2b2b2b;border-radius:2px;"></div>
<span style="top:321.00px;font-size:12px;line-height:16px;color:#e4e4e4;white-space:pre;letter-spacing:-0.606px;left:1684px;">4.984</span>
<div style="left:1751px;top:319px;width:68px;height:18px;background:#2b2b2b;border-radius:2px;"></div>
<span style="top:321.00px;font-size:12px;line-height:16px;color:#e4e4e4;white-space:pre;letter-spacing:-0.606px;left:1756px;">0.000</span>
<span style="top:342.00px;font-size:12px;line-height:16px;color:#d2d2d2;white-space:pre;letter-spacing:-0.310px;right:321.31px;">Rotate</span>
<div style="left:1607px;top:341px;width:68px;height:18px;background:#2b2b2b;border-radius:2px;"></div>
<span style="top:343.00px;font-size:12px;line-height:16px;color:#e4e4e4;white-space:pre;letter-spacing:-0.606px;left:1612px;">0.000</span>
<div style="left:1679px;top:341px;width:68px;height:18px;background:#2b2b2b;border-radius:2px;"></div>
<span style="top:343.00px;font-size:12px;line-height:16px;color:#e4e4e4;white-space:pre;letter-spacing:-0.606px;left:1684px;">0.000</span>
<div style="left:1751px;top:341px;width:68px;height:18px;background:#2b2b2b;border-radius:2px;"></div>
<span style="top:343.00px;font-size:12px;line-height:16px;color:#e4e4e4;white-space:pre;letter-spacing:-0.606px;left:1756px;">0.000</span>
<span style="top:364.00px;font-size:12px;line-height:16px;color:#d2d2d2;white-space:pre;letter-spacing:-0.906px;right:321.91px;">Scale</span>
<div style="left:1607px;top:363px;width:68px;height:18px;background:#2b2b2b;border-radius:2px;"></div>
<span style="top:365.00px;font-size:12px;line-height:16px;color:#e4e4e4;white-space:pre;letter-spacing:-0.617px;left:1612px;">10.000</span>
<div style="left:1679px;top:363px;width:68px;height:18px;background:#2b2b2b;border-radius:2px;"></div>
<span style="top:365.00px;font-size:12px;line-height:16px;color:#e4e4e4;white-space:pre;letter-spacing:-0.617px;left:1684px;">10.000</span>
<div style="left:1751px;top:363px;width:68px;height:18px;background:#2b2b2b;border-radius:2px;"></div>
<span style="top:365.00px;font-size:12px;line-height:16px;color:#e4e4e4;white-space:pre;letter-spacing:-0.617px;left:1756px;">10.000</span>
<span style="top:386.00px;font-size:12px;line-height:16px;color:#d2d2d2;white-space:pre;letter-spacing:-0.606px;right:321.61px;">Shear</span>
<div style="left:1607px;top:385px;width:68px;height:18px;background:#2b2b2b;border-radius:2px;"></div>
<span style="top:387.00px;font-size:12px;line-height:16px;color:#e4e4e4;white-space:pre;letter-spacing:-0.606px;left:1612px;">0.000</span>
<div style="left:1679px;top:385px;width:68px;height:18px;background:#2b2b2b;border-radius:2px;"></div>
<span style="top:387.00px;font-size:12px;line-height:16px;color:#e4e4e4;white-space:pre;letter-spacing:-0.606px;left:1684px;">0.000</span>
<div style="left:1751px;top:385px;width:68px;height:18px;background:#2b2b2b;border-radius:2px;"></div>
<span style="top:387.00px;font-size:12px;line-height:16px;color:#e4e4e4;white-space:pre;letter-spacing:-0.606px;left:1756px;">0.000</span>
<span style="top:408.00px;font-size:12px;line-height:16px;color:#d2d2d2;white-space:pre;letter-spacing:-0.198px;right:321.20px;">Rotate Order</span>
<div style="left:1608px;top:406px;width:59px;height:19px;background:#5d5d5d;border-radius:2px;"></div>
<div style="left:1647px;top:406px;width:1px;height:19px;background:#4a4a4a;"></div>
<span style="top:409.00px;font-size:12px;line-height:16px;color:#d2d2d2;white-space:pre;letter-spacing:-0.667px;left:1611px;">xyz</span>
<svg style="left:1652px;top:413px;" width="10" height="6" viewBox="0 0 10 6"><path d="M0 0h10l-5 5.500z" fill="#d0d0d0"/></svg>
<span style="top:430.00px;font-size:12px;line-height:16px;color:#d2d2d2;white-space:pre;letter-spacing:-0.337px;right:321.34px;">Rotate Axis</span>
<div style="left:1607px;top:429px;width:68px;height:18px;background:#2b2b2b;border-radius:2px;"></div>
<span style="top:431.00px;font-size:12px;line-height:16px;color:#e4e4e4;white-space:pre;letter-spacing:-0.606px;left:1612px;">0.000</span>
<div style="left:1679px;top:429px;width:68px;height:18px;background:#2b2b2b;border-radius:2px;"></div>
<span style="top:431.00px;font-size:12px;line-height:16px;color:#e4e4e4;white-space:pre;letter-spacing:-0.606px;left:1684px;">0.000</span>
<div style="left:1751px;top:429px;width:68px;height:18px;background:#2b2b2b;border-radius:2px;"></div>
<span style="top:431.00px;font-size:12px;line-height:16px;color:#e4e4e4;white-space:pre;letter-spacing:-0.606px;left:1756px;">0.000</span>
<div style="left:1607px;top:452px;width:13px;height:13px;background:#2b2b2b;border-radius:2px;"></div>
<svg style="left:1608px;top:453px;" width="11" height="11" viewBox="0 0 11 11"><path d="M1.500 5.500l3 3.500 5-8" stroke="#e8e8e8" stroke-width="1.800" fill="none"/></svg>
<span style="top:451.00px;font-size:12px;line-height:16px;color:#d2d2d2;white-space:pre;letter-spacing:-0.206px;left:1625px;">Inherits Transform</span>
<div style="left:1454px;top:470px;width:438px;height:20px;background:#5d5d5d;border-radius:2px;"></div>
<div style="left:1455px;top:490px;width:436px;height:2px;background:#3d3d3d;"></div>
<svg style="left:1464px;top:473px;" width="8" height="12" viewBox="0 0 8 12"><path d="M0 0.500l6.500 5.250L0 11z" fill="#f0f0f0"/></svg>
<span style="top:473.00px;font-size:12px;line-height:16px;color:#cfcfcf;white-space:pre;font-weight:bold;letter-spacing:-0.669px;left:1487px;">Pivots</span>
<div style="left:1454px;top:492px;width:438px;height:20px;background:#5d5d5d;border-radius:2px;"></div>
<div style="left:1455px;top:512px;width:436px;height:2px;background:#3d3d3d;"></div>
<svg style="left:1464px;top:495px;" width="8" height="12" viewBox="0 0 8 12"><path d="M0 0.500l6.500 5.250L0 11z" fill="#f0f0f0"/></svg>
<span style="top:495.00px;font-size:12px;line-height:16px;color:#cfcfcf;white-space:pre;font-weight:bold;letter-spacing:-0.412px;left:1487px;">Limit Information</span>
<div style="left:1454px;top:514px;width:438px;height:20px;background:#5d5d5d;border-radius:2px;"></div>
<div style="left:1455px;top:534px;width:436px;height:2px;background:#3d3d3d;"></div>
<svg style="left:1464px;top:517px;" width="8" height="12" viewBox="0 0 8 12"><path d="M0 0.500l6.500 5.250L0 11z" fill="#f0f0f0"/></svg>
<span style="top:517.00px;font-size:12px;line-height:16px;color:#cfcfcf;white-space:pre;font-weight:bold;letter-spacing:-0.598px;left:1487px;">Display</span>
<div style="left:1454px;top:536px;width:438px;height:20px;background:#5d5d5d;border-radius:2px;"></div>
<div style="left:1455px;top:556px;width:436px;height:2px;background:#3d3d3d;"></div>
<svg style="left:1464px;top:539px;" width="8" height="12" viewBox="0 0 8 12"><path d="M0 0.500l6.500 5.250L0 11z" fill="#f0f0f0"/></svg>
<span style="top:539.00px;font-size:12px;line-height:16px;color:#cfcfcf;white-space:pre;font-weight:bold;letter-spacing:-0.476px;left:1487px;">Node Behavior</span>
<div style="left:1454px;top:558px;width:438px;height:20px;background:#5d5d5d;border-radius:2px;"></div>
<div style="left:1455px;top:578px;width:436px;height:2px;background:#3d3d3d;"></div>
<svg style="left:1464px;top:561px;" width="8" height="12" viewBox="0 0 8 12"><path d="M0 0.500l6.500 5.250L0 11z" fill="#f0f0f0"/></svg>
<span style="top:561.00px;font-size:12px;line-height:16px;color:#cfcfcf;white-space:pre;font-weight:bold;letter-spacing:-0.586px;left:1487px;">UUID</span>
<div style="left:1454px;top:580px;width:438px;height:20px;background:#5d5d5d;border-radius:2px;"></div>
<div style="left:1455px;top:600px;width:436px;height:2px;background:#3d3d3d;"></div>
<svg style="left:1461px;top:586px;" width="12" height="8" viewBox="0 0 12 8"><path d="M0 0h11.500l-5.750 6.500z" fill="#f0f0f0"/></svg>
<span style="top:583.00px;font-size:12px;line-height:16px;color:#cfcfcf;white-space:pre;font-weight:bold;letter-spacing:-0.536px;left:1487px;">Extra Attributes</span>
<div style="left:1456px;top:602px;width:434px;height:109px;background:#494949;"></div>
<span style="top:605.00px;font-size:12px;line-height:16px;color:#d2d2d2;white-space:pre;letter-spacing:-0.233px;right:321.73px;">Max Deviation</span>
<div style="left:1607px;top:604px;width:68px;height:18px;background:#2b2b2b;border-radius:2px;"></div>
<span style="top:606.00px;font-size:12px;line-height:16px;color:#e4e4e4;white-space:pre;letter-spacing:-0.606px;left:1612px;">0.000</span>
<span style="top:627.00px;font-size:12px;line-height:16px;color:#d2d2d2;white-space:pre;letter-spacing:-0.602px;right:322.10px;">Scene Radius</span>
<div style="left:1607px;top:626px;width:68px;height:18px;background:#2b2b2b;border-radius:2px;"></div>
<span style="top:628.00px;font-size:12px;line-height:16px;color:#e4e4e4;white-space:pre;letter-spacing:-0.617px;left:1612px;">13.890</span>
<span style="top:649.00px;font-size:12px;line-height:16px;color:#d2d2d2;white-space:pre;letter-spacing:-0.262px;right:321.76px;">Original Node Name</span>
<div style="left:1607px;top:648px;width:275px;height:18px;background:#2b2b2b;border-radius:2px;"></div>
<span style="top:650.00px;font-size:12px;line-height:16px;color:#e4e4e4;white-space:pre;letter-spacing:-0.591px;left:1612px;">pCube1</span>
<span style="top:671.00px;font-size:12px;line-height:16px;color:#d2d2d2;white-space:pre;letter-spacing:-0.254px;right:321.75px;">Intended Node Name</span>
<div style="left:1607px;top:670px;width:275px;height:18px;background:#2b2b2b;border-radius:2px;"></div>
<span style="top:672.00px;font-size:12px;line-height:16px;color:#e4e4e4;white-space:pre;letter-spacing:-0.733px;left:1612px;">pCube1_LOD1</span>
<span style="top:693.00px;font-size:12px;line-height:16px;color:#d2d2d2;white-space:pre;letter-spacing:-0.291px;right:321.79px;">Imported Node Name</span>
<div style="left:1607px;top:692px;width:275px;height:18px;background:#2b2b2b;border-radius:2px;"></div>
<span style="top:694.00px;font-size:12px;line-height:16px;color:#e4e4e4;white-space:pre;letter-spacing:-0.733px;left:1612px;">pCube1_LOD1</span>
<svg style="left:1598px;top:807px;" width="148" height="1" viewBox="0 0 148 1"><rect x="0" y="0" width="1" height="1" fill="#8a8a8a"/><rect x="2" y="0" width="1" height="1" fill="#8a8a8a"/><rect x="4" y="0" width="1" height="1" fill="#8a8a8a"/><rect x="6" y="0" width="1" height="1" fill="#8a8a8a"/><rect x="8" y="0" width="1" height="1" fill="#8a8a8a"/><rect x="10" y="0" width="1" height="1" fill="#8a8a8a"/><rect x="12" y="0" width="1" height="1" fill="#8a8a8a"/><rect x="14" y="0" width="1" height="1" fill="#8a8a8a"/><rect x="16" y="0" width="1" height="1" fill="#8a8a8a"/><rect x="18" y="0" width="1" height="1" fill="#8a8a8a"/><rect x="20" y="0" width="1" height="1" fill="#8a8a8a"/><rect x="22" y="0" width="1" height="1" fill="#8a8a8a"/><rect x="24" y="0" width="1" height="1" fill="#8a8a8a"/><rect x="26" y="0" width="1" height="1" fill="#8a8a8a"/><rect x="28" y="0" width="1" height="1" fill="#8a8a8a"/><rect x="30" y="0" width="1" height="1" fill="#8a8a8a"/><rect x="32" y="0" width="1" height="1" fill="#8a8a8a"/><rect x="34" y="0" width="1" height="1" fill="#8a8a8a"/><rect x="36" y="0" width="1" height="1" fill="#8a8a8a"/><rect x="38" y="0" width="1" height="1" fill="#8a8a8a"/><rect x="40" y="0" width="1" height="1" fill="#8a8a8a"/><rect x="42" y="0" width="1" height="1" fill="#8a8a8a"/><rect x="44" y="0" width="1" height="1" fill="#8a8a8a"/><rect x="46" y="0" width="1" height="1" fill="#8a8a8a"/><rect x="48" y="0" width="1" height="1" fill="#8a8a8a"/><rect x="50" y="0" width="1" height="1" fill="#8a8a8a"/><rect x="52" y="0" width="1" height="1" fill="#8a8a8a"/><rect x="54" y="0" width="1" height="1" fill="#8a8a8a"/><rect x="56" y="0" width="1" height="1" fill="#8a8a8a"/><rect x="58" y="0" width="1" height="1" fill="#8a8a8a"/><rect x="60" y="0" width="1" height="1" fill="#8a8a8a"/><rect x="62" y="0" width="1" height="1" fill="#8a8a8a"/><rect x="64" y="0" width="1" height="1" fill="#8a8a8a"/><rect x="66" y="0" width="1" height="1" fill="#8a8a8a"/><rect x="68" y="0" width="1" height="1" fill="#8a8a8a"/><rect x="70" y="0" width="1" height="1" fill="#8a8a8a"/><rect x="72" y="0" width="1" height="1" fill="#8a8a8a"/><rect x="74" y="0" width="1" height="1" fill="#8a8a8a"/><rect x="76" y="0" width="1" height="1" fill="#8a8a8a"/><rect x="78" y="0" width="1" height="1" fill="#8a8a8a"/><rect x="80" y="0" width="1" height="1" fill="#8a8a8a"/><rect x="82" y="0" width="1" height="1" fill="#8a8a8a"/><rect x="84" y="0" width="1" height="1" fill="#8a8a8a"/><rect x="86" y="0" width="1" height="1" fill="#8a8a8a"/><rect x="88" y="0" width="1" height="1" fill="#8a8a8a"/><rect x="90" y="0" width="1" height="1" fill="#8a8a8a"/><rect x="92" y="0" width="1" height="1" fill="#8a8a8a"/><rect x="94" y="0" width="1" height="1" fill="#8a8a8a"/><rect x="96" y="0" width="1" height="1" fill="#8a8a8a"/><rect x="98" y="0" width="1" height="1" fill="#8a8a8a"/><rect x="100" y="0" width="1" height="1" fill="#8a8a8a"/><rect x="102" y="0" width="1" height="1" fill="#8a8a8a"/><rect x="104" y="0" width="1" height="1" fill="#8a8a8a"/><rect x="106" y="0" width="1" height="1" fill="#8a8a8a"/><rect x="108" y="0" width="1" height="1" fill="#8a8a8a"/><rect x="110" y="0" width="1" height="1" fill="#8a8a8a"/><rect x="112" y="0" width="1" height="1" fill="#8a8a8a"/><rect x="114" y="0" width="1" height="1" fill="#8a8a8a"/><rect x="116" y="0" width="1" height="1" fill="#8a8a8a"/><rect x="118" y="0" width="1" height="1" fill="#8a8a8a"/><rect x="120" y="0" width="1" height="1" fill="#8a8a8a"/><rect x="122" y="0" width="1" height="1" fill="#8a8a8a"/><rect x="124" y="0" width="1" height="1" fill="#8a8a8a"/><rect x="126" y="0" width="1" height="1" fill="#8a8a8a"/><rect x="128" y="0" width="1" height="1" fill="#8a8a8a"/><rect x="130" y="0" width="1" height="1" fill="#8a8a8a"/><rect x="132" y="0" width="1" height="1" fill="#8a8a8a"/><rect x="134" y="0" width="1" height="1" fill="#8a8a8a"/><rect x="136" y="0" width="1" height="1" fill="#8a8a8a"/><rect x="138" y="0" width="1" height="1" fill="#8a8a8a"/><rect x="140" y="0" width="1" height="1" fill="#8a8a8a"/><rect x="142" y="0" width="1" height="1" fill="#8a8a8a"/><rect x="144" y="0" width="1" height="1" fill="#8a8a8a"/><rect x="146" y="0" width="1" height="1" fill="#8a8a8a"/></svg>
<span style="top:810.00px;font-size:12px;line-height:16px;color:#e0e0e0;white-space:pre;font-weight:bold;letter-spacing:-0.773px;left:1457.5px;">Notes:  pCube1_LOD1</span>
<div style="left:1448px;top:824px;width:450px;height:41px;background:#2b2b2b;"></div>
<div style="left:1445px;top:870px;width:149px;height:26px;background:#5d5d5d;border-radius:2px;"></div>
<div style="top:876.00px;font-size:12px;line-height:16px;color:#eeeeee;white-space:pre;letter-spacing:-0.560px;left:1019.22px;width:1000px;text-align:center;"><span style="position:static">Select</span></div>
<div style="left:1596px;top:870px;width:153px;height:26px;background:#5d5d5d;border-radius:2px;"></div>
<div style="top:876.00px;font-size:12px;line-height:16px;color:#eeeeee;white-space:pre;letter-spacing:-0.071px;left:1172.46px;width:1000px;text-align:center;"><span style="position:static">Load Attributes</span></div>
<div style="left:1751px;top:870px;width:150px;height:26px;background:#5d5d5d;border-radius:2px;"></div>
<div style="top:876.00px;font-size:12px;line-height:16px;color:#eeeeee;white-space:pre;letter-spacing:-0.561px;left:1325.72px;width:1000px;text-align:center;"><span style="position:static">Copy Tab</span></div>
<div style="left:1903px;top:148px;width:17px;height:753px;background:#444444;"></div>
<div style="left:1904px;top:152px;width:16px;height:154px;background:#3b3b3b;border:1px solid #303030;border-right:none;border-radius:3px 0 0 3px;"></div>
<div style="left:1904px;top:309px;width:16px;height:110px;background:#3b3b3b;border:1px solid #303030;border-right:none;border-radius:3px 0 0 3px;"></div>
<div style="left:1904px;top:423px;width:16px;height:97px;background:#464646;border-radius:3px 0 0 3px;"></div>
<div style="left:1760.70px;top:220.74px;width:300px;height:16px;transform:rotate(90deg);text-align:center;font-size:11px;line-height:16px;color:#a6a6a6;white-space:pre;letter-spacing:0.078px;"><span style="position:static">Channel Box / Layer Editor</span></div>
<div style="left:1760.70px;top:355.26px;width:300px;height:16px;transform:rotate(90deg);text-align:center;font-size:11px;line-height:16px;color:#a6a6a6;white-space:pre;letter-spacing:0.520px;"><span style="position:static">Modeling Toolkit</span></div>
<div style="left:1760.70px;top:463.03px;width:300px;height:16px;transform:rotate(90deg);text-align:center;font-size:11px;line-height:16px;color:#f0f0f0;white-space:pre;letter-spacing:0.452px;"><span style="position:static">Attribute Editor</span></div>
<div style="left:0px;top:901px;width:1920px;height:139px;background:#444444;"></div>
<div style="left:0px;top:901px;width:1920px;height:2px;background:#3a3a3a;"></div>
<div style="left:0px;top:943px;width:1920px;height:2px;background:#3a3a3a;"></div>
<div style="left:0px;top:980px;width:1920px;height:2px;background:#3a3a3a;"></div>
<div style="left:0px;top:1013.5px;width:1920px;height:2px;background:#3a3a3a;"></div>
<svg style="left:4px;top:906px;" width="4" height="34" viewBox="0 0 4 34"><rect x="0" y="0" width="1" height="1" fill="#6f6f6f"/><rect x="0" y="2" width="1" height="1" fill="#6f6f6f"/><rect x="0" y="4" width="1" height="1" fill="#6f6f6f"/><rect x="0" y="6" width="1" height="1" fill="#6f6f6f"/><rect x="0" y="8" width="1" height="1" fill="#6f6f6f"/><rect x="0" y="10" width="1" height="1" fill="#6f6f6f"/><rect x="0" y="12" width="1" height="1" fill="#6f6f6f"/><rect x="0" y="14" width="1" height="1" fill="#6f6f6f"/><rect x="0" y="16" width="1" height="1" fill="#6f6f6f"/><rect x="0" y="18" width="1" height="1" fill="#6f6f6f"/><rect x="0" y="20" width="1" height="1" fill="#6f6f6f"/><rect x="0" y="22" width="1" height="1" fill="#6f6f6f"/><rect x="0" y="24" width="1" height="1" fill="#6f6f6f"/><rect x="0" y="26" width="1" height="1" fill="#6f6f6f"/><rect x="0" y="28" width="1" height="1" fill="#6f6f6f"/><rect x="0" y="30" width="1" height="1" fill="#6f6f6f"/><rect x="0" y="32" width="1" height="1" fill="#6f6f6f"/><rect x="2" y="0" width="1" height="1" fill="#6f6f6f"/><rect x="2" y="2" width="1" height="1" fill="#6f6f6f"/><rect x="2" y="4" width="1" height="1" fill="#6f6f6f"/><rect x="2" y="6" width="1" height="1" fill="#6f6f6f"/><rect x="2" y="8" width="1" height="1" fill="#6f6f6f"/><rect x="2" y="10" width="1" height="1" fill="#6f6f6f"/><rect x="2" y="12" width="1" height="1" fill="#6f6f6f"/><rect x="2" y="14" width="1" height="1" fill="#6f6f6f"/><rect x="2" y="16" width="1" height="1" fill="#6f6f6f"/><rect x="2" y="18" width="1" height="1" fill="#6f6f6f"/><rect x="2" y="20" width="1" height="1" fill="#6f6f6f"/><rect x="2" y="22" width="1" height="1" fill="#6f6f6f"/><rect x="2" y="24" width="1" height="1" fill="#6f6f6f"/><rect x="2" y="26" width="1" height="1" fill="#6f6f6f"/><rect x="2" y="28" width="1" height="1" fill="#6f6f6f"/><rect x="2" y="30" width="1" height="1" fill="#6f6f6f"/><rect x="2" y="32" width="1" height="1" fill="#6f6f6f"/></svg>
<svg style="left:4px;top:948px;" width="4" height="30" viewBox="0 0 4 30"><rect x="0" y="0" width="1" height="1" fill="#6f6f6f"/><rect x="0" y="2" width="1" height="1" fill="#6f6f6f"/><rect x="0" y="4" width="1" height="1" fill="#6f6f6f"/><rect x="0" y="6" width="1" height="1" fill="#6f6f6f"/><rect x="0" y="8" width="1" height="1" fill="#6f6f6f"/><rect x="0" y="10" width="1" height="1" fill="#6f6f6f"/><rect x="0" y="12" width="1" height="1" fill="#6f6f6f"/><rect x="0" y="14" width="1" height="1" fill="#6f6f6f"/><rect x="0" y="16" width="1" height="1" fill="#6f6f6f"/><rect x="0" y="18" width="1" height="1" fill="#6f6f6f"/><rect x="0" y="20" width="1" height="1" fill="#6f6f6f"/><rect x="0" y="22" width="1" height="1" fill="#6f6f6f"/><rect x="0" y="24" width="1" height="1" fill="#6f6f6f"/><rect x="0" y="26" width="1" height="1" fill="#6f6f6f"/><rect x="0" y="28" width="1" height="1" fill="#6f6f6f"/><rect x="2" y="0" width="1" height="1" fill="#6f6f6f"/><rect x="2" y="2" width="1" height="1" fill="#6f6f6f"/><rect x="2" y="4" width="1" height="1" fill="#6f6f6f"/><rect x="2" y="6" width="1" height="1" fill="#6f6f6f"/><rect x="2" y="8" width="1" height="1" fill="#6f6f6f"/><rect x="2" y="10" width="1" height="1" fill="#6f6f6f"/><rect x="2" y="12" width="1" height="1" fill="#6f6f6f"/><rect x="2" y="14" width="1" height="1" fill="#6f6f6f"/><rect x="2" y="16" width="1" height="1" fill="#6f6f6f"/><rect x="2" y="18" width="1" height="1" fill="#6f6f6f"/><rect x="2" y="20" width="1" height="1" fill="#6f6f6f"/><rect x="2" y="22" width="1" height="1" fill="#6f6f6f"/><rect x="2" y="24" width="1" height="1" fill="#6f6f6f"/><rect x="2" y="26" width="1" height="1" fill="#6f6f6f"/><rect x="2" y="28" width="1" height="1" fill="#6f6f6f"/></svg>
<svg style="left:4px;top:984px;" width="4" height="28" viewBox="0 0 4 28"><rect x="0" y="0" width="1" height="1" fill="#6f6f6f"/><rect x="0" y="2" width="1" height="1" fill="#6f6f6f"/><rect x="0" y="4" width="1" height="1" fill="#6f6f6f"/><rect x="0" y="6" width="1" height="1" fill="#6f6f6f"/><rect x="0" y="8" width="1" height="1" fill="#6f6f6f"/><rect x="0" y="10" width="1" height="1" fill="#6f6f6f"/><rect x="0" y="12" width="1" height="1" fill="#6f6f6f"/><rect x="0" y="14" width="1" height="1" fill="#6f6f6f"/><rect x="0" y="16" width="1" height="1" fill="#6f6f6f"/><rect x="0" y="18" width="1" height="1" fill="#6f6f6f"/><rect x="0" y="20" width="1" height="1" fill="#6f6f6f"/><rect x="0" y="22" width="1" height="1" fill="#6f6f6f"/><rect x="0" y="24" width="1" height="1" fill="#6f6f6f"/><rect x="0" y="26" width="1" height="1" fill="#6f6f6f"/><rect x="2" y="0" width="1" height="1" fill="#6f6f6f"/><rect x="2" y="2" width="1" height="1" fill="#6f6f6f"/><rect x="2" y="4" width="1" height="1" fill="#6f6f6f"/><rect x="2" y="6" width="1" height="1" fill="#6f6f6f"/><rect x="2" y="8" width="1" height="1" fill="#6f6f6f"/><rect x="2" y="10" width="1" height="1" fill="#6f6f6f"/><rect x="2" y="12" width="1" height="1" fill="#6f6f6f"/><rect x="2" y="14" width="1" height="1" fill="#6f6f6f"/><rect x="2" y="16" width="1" height="1" fill="#6f6f6f"/><rect x="2" y="18" width="1" height="1" fill="#6f6f6f"/><rect x="2" y="20" width="1" height="1" fill="#6f6f6f"/><rect x="2" y="22" width="1" height="1" fill="#6f6f6f"/><rect x="2" y="24" width="1" height="1" fill="#6f6f6f"/><rect x="2" y="26" width="1" height="1" fill="#6f6f6f"/></svg>
<svg style="left:4px;top:1018px;" width="4" height="20" viewBox="0 0 4 20"><rect x="0" y="0" width="1" height="1" fill="#6f6f6f"/><rect x="0" y="2" width="1" height="1" fill="#6f6f6f"/><rect x="0" y="4" width="1" height="1" fill="#6f6f6f"/><rect x="0" y="6" width="1" height="1" fill="#6f6f6f"/><rect x="0" y="8" width="1" height="1" fill="#6f6f6f"/><rect x="0" y="10" width="1" height="1" fill="#6f6f6f"/><rect x="0" y="12" width="1" height="1" fill="#6f6f6f"/><rect x="0" y="14" width="1" height="1" fill="#6f6f6f"/><rect x="0" y="16" width="1" height="1" fill="#6f6f6f"/><rect x="0" y="18" width="1" height="1" fill="#6f6f6f"/><rect x="2" y="0" width="1" height="1" fill="#6f6f6f"/><rect x="2" y="2" width="1" height="1" fill="#6f6f6f"/><rect x="2" y="4" width="1" height="1" fill="#6f6f6f"/><rect x="2" y="6" width="1" height="1" fill="#6f6f6f"/><rect x="2" y="8" width="1" height="1" fill="#6f6f6f"/><rect x="2" y="10" width="1" height="1" fill="#6f6f6f"/><rect x="2" y="12" width="1" height="1" fill="#6f6f6f"/><rect x="2" y="14" width="1" height="1" fill="#6f6f6f"/><rect x="2" y="16" width="1" height="1" fill="#6f6f6f"/><rect x="2" y="18" width="1" height="1" fill="#6f6f6f"/></svg>
<div style="left:13px;top:907px;width:1612px;height:32px;background:#2b2b2b;"></div>
<div style="left:13px;top:936px;width:1604px;height:2px;background:#363636;"></div>
<div style="left:22px;top:907px;width:11px;height:32px;background:#555555;"></div>
<span style="top:920.00px;font-size:11px;line-height:14px;color:#f0f0f0;white-space:pre;left:24px;">1</span>
<div style="left:73px;top:920px;width:2px;height:15px;background:#a0a0a0;"></div>
<span style="top:905.00px;font-size:11px;line-height:14px;color:#8f8f8f;white-space:pre;letter-spacing:-0.025px;left:76.5px;">5</span>
<div style="left:140px;top:920px;width:2px;height:15px;background:#a0a0a0;"></div>
<span style="top:905.00px;font-size:11px;line-height:14px;color:#8f8f8f;white-space:pre;letter-spacing:-0.025px;left:143.5px;">10</span>
<div style="left:206px;top:920px;width:2px;height:15px;background:#a0a0a0;"></div>
<span style="top:905.00px;font-size:11px;line-height:14px;color:#8f8f8f;white-space:pre;letter-spacing:-0.025px;left:209.5px;">15</span>
<div style="left:273px;top:920px;width:2px;height:15px;background:#a0a0a0;"></div>
<span style="top:905.00px;font-size:11px;line-height:14px;color:#8f8f8f;white-space:pre;letter-spacing:-0.025px;left:276.5px;">20</span>
<div style="left:339px;top:920px;width:2px;height:15px;background:#a0a0a0;"></div>
<span style="top:905.00px;font-size:11px;line-height:14px;color:#8f8f8f;white-space:pre;letter-spacing:-0.025px;left:342.5px;">25</span>
<div style="left:406px;top:920px;width:2px;height:15px;background:#a0a0a0;"></div>
<span style="top:905.00px;font-size:11px;line-height:14px;color:#8f8f8f;white-space:pre;letter-spacing:-0.025px;left:409.5px;">30</span>
<div style="left:472px;top:920px;width:2px;height:15px;background:#a0a0a0;"></div>
<span style="top:905.00px;font-size:11px;line-height:14px;color:#8f8f8f;white-space:pre;letter-spacing:-0.025px;left:475.5px;">35</span>
<div style="left:539px;top:920px;width:2px;height:15px;background:#a0a0a0;"></div>
<span style="top:905.00px;font-size:11px;line-height:14px;color:#8f8f8f;white-space:pre;letter-spacing:-0.025px;left:542.5px;">40</span>
<div style="left:605px;top:920px;width:2px;height:15px;background:#a0a0a0;"></div>
<span style="top:905.00px;font-size:11px;line-height:14px;color:#8f8f8f;white-space:pre;letter-spacing:-0.025px;left:608.5px;">45</span>
<div style="left:672px;top:920px;width:2px;height:15px;background:#a0a0a0;"></div>
<span style="top:905.00px;font-size:11px;line-height:14px;color:#8f8f8f;white-space:pre;letter-spacing:-0.025px;left:675.5px;">50</span>
<div style="left:738px;top:920px;width:2px;height:15px;background:#a0a0a0;"></div>
<span style="top:905.00px;font-size:11px;line-height:14px;color:#8f8f8f;white-space:pre;letter-spacing:-0.025px;left:741.5px;">55</span>
<div style="left:805px;top:920px;width:2px;height:15px;background:#a0a0a0;"></div>
<span style="top:905.00px;font-size:11px;line-height:14px;color:#8f8f8f;white-space:pre;letter-spacing:-0.025px;left:808.5px;">60</span>
<div style="left:871px;top:920px;width:2px;height:15px;background:#a0a0a0;"></div>
<span style="top:905.00px;font-size:11px;line-height:14px;color:#8f8f8f;white-space:pre;letter-spacing:-0.025px;left:874.5px;">65</span>
<div style="left:938px;top:920px;width:2px;height:15px;background:#a0a0a0;"></div>
<span style="top:905.00px;font-size:11px;line-height:14px;color:#8f8f8f;white-space:pre;letter-spacing:-0.025px;left:941.5px;">70</span>
<div style="left:1004px;top:920px;width:2px;height:15px;background:#a0a0a0;"></div>
<span style="top:905.00px;font-size:11px;line-height:14px;color:#8f8f8f;white-space:pre;letter-spacing:-0.025px;left:1007.5px;">75</span>
<div style="left:1071px;top:920px;width:2px;height:15px;background:#a0a0a0;"></div>
<span style="top:905.00px;font-size:11px;line-height:14px;color:#8f8f8f;white-space:pre;letter-spacing:-0.025px;left:1074.5px;">80</span>
<div style="left:1137px;top:920px;width:2px;height:15px;background:#a0a0a0;"></div>
<span style="top:905.00px;font-size:11px;line-height:14px;color:#8f8f8f;white-space:pre;letter-spacing:-0.025px;left:1140.5px;">85</span>
<div style="left:1204px;top:920px;width:2px;height:15px;background:#a0a0a0;"></div>
<span style="top:905.00px;font-size:11px;line-height:14px;color:#8f8f8f;white-space:pre;letter-spacing:-0.025px;left:1207.5px;">90</span>
<div style="left:1270px;top:920px;width:2px;height:15px;background:#a0a0a0;"></div>
<span style="top:905.00px;font-size:11px;line-height:14px;color:#8f8f8f;white-space:pre;letter-spacing:-0.025px;left:1273.5px;">95</span>
<div style="left:1337px;top:920px;width:2px;height:15px;background:#a0a0a0;"></div>
<span style="top:905.00px;font-size:11px;line-height:14px;color:#8f8f8f;white-space:pre;letter-spacing:-0.020px;left:1340.5px;">100</span>
<div style="left:1403px;top:920px;width:2px;height:15px;background:#a0a0a0;"></div>
<span style="top:905.00px;font-size:11px;line-height:14px;color:#8f8f8f;white-space:pre;letter-spacing:-0.020px;left:1406.5px;">105</span>
<div style="left:1470px;top:920px;width:2px;height:15px;background:#a0a0a0;"></div>
<span style="top:905.00px;font-size:11px;line-height:14px;color:#8f8f8f;white-space:pre;letter-spacing:0.251px;left:1473.5px;">110</span>
<div style="left:1536px;top:920px;width:2px;height:15px;background:#a0a0a0;"></div>
<span style="top:905.00px;font-size:11px;line-height:14px;color:#8f8f8f;white-space:pre;letter-spacing:0.251px;left:1539.5px;">115</span>
<div style="left:1603px;top:920px;width:2px;height:15px;background:#a0a0a0;"></div>
<span style="top:905.00px;font-size:11px;line-height:14px;color:#8f8f8f;white-space:pre;letter-spacing:-0.020px;left:1606.5px;">120</span>
<div style="left:1632px;top:913px;width:88px;height:18px;background:#2b2b2b;border-radius:2px;"></div>
<span style="top:916.00px;font-size:11px;line-height:14px;color:#e4e4e4;white-space:pre;left:1638px;">1</span>
<svg style="left:1730px;top:915px;" width="18" height="13" viewBox="0 0 18 13"><rect x="0" y="0" width="2" height="13" fill="#d0d0d0"/><path d="M10 0v13L3 6.500zM17.500 0v13L10.500 6.500z" fill="#d0d0d0"/></svg>
<svg style="left:1755px;top:915px;" width="13" height="13" viewBox="0 0 13 13"><rect x="0" y="0" width="2" height="13" fill="#d0d0d0"/><path d="M12 0v13L3.500 6.500z" fill="#d0d0d0"/></svg>
<svg style="left:1776px;top:912px;" width="16" height="19" viewBox="0 0 16 19"><rect x="1" y="0.500" width="3.200" height="17.500" rx="1" fill="#e5853a"/><path d="M14.500 3v13L5 9.500z" fill="#d0d0d0"/></svg>
<svg style="left:1800px;top:913px;" width="14" height="16" viewBox="0 0 14 16"><path d="M13.500 0v16L0 8z" fill="#d0d0d0"/></svg>
<svg style="left:1824px;top:913px;" width="14" height="16" viewBox="0 0 14 16"><path d="M0.500 0v16l13.500-8z" fill="#d0d0d0"/></svg>
<svg style="left:1846px;top:912px;" width="16" height="19" viewBox="0 0 16 19"><path d="M1 3v13l9.500-6.500z" fill="#d0d0d0"/><rect x="11" y="0.500" width="3.200" height="17.500" rx="1" fill="#e5853a"/></svg>
<svg style="left:1870px;top:915px;" width="13" height="13" viewBox="0 0 13 13"><path d="M1 0v13l8.500-6.500z" fill="#d0d0d0"/><rect x="11" y="0" width="2" height="13" fill="#d0d0d0"/></svg>
<svg style="left:1890px;top:915px;" width="18" height="13" viewBox="0 0 18 13"><path d="M0.500 0v13l7-6.500zM8 0v13l7-6.500z" fill="#d0d0d0"/><rect x="16" y="0" width="2" height="13" fill="#d0d0d0"/></svg>
<div style="left:14px;top:950px;width:88px;height:25px;background:#2b2b2b;border-radius:3px;"></div>
<span style="top:956.00px;font-size:11px;line-height:14px;color:#e4e4e4;white-space:pre;letter-spacing:-0.625px;left:19.5px;">1</span>
<div style="left:110px;top:950px;width:88px;height:25px;background:#2b2b2b;border-radius:3px;"></div>
<span style="top:956.00px;font-size:11px;line-height:14px;color:#e4e4e4;white-space:pre;letter-spacing:-0.625px;left:115.5px;">1</span>
<div style="left:1205px;top:950px;width:88px;height:25px;background:#2b2b2b;border-radius:3px;"></div>
<span style="top:956.00px;font-size:11px;line-height:14px;color:#e4e4e4;white-space:pre;letter-spacing:0.047px;left:1210.5px;">120</span>
<div style="left:1301px;top:950px;width:88px;height:25px;background:#2b2b2b;border-radius:3px;"></div>
<span style="top:956.00px;font-size:11px;line-height:14px;color:#e4e4e4;white-space:pre;letter-spacing:0.047px;left:1306.5px;">200</span>
<div style="left:205px;top:950px;width:993px;height:25px;background:#393939;"></div>
<div style="left:210px;top:952px;width:599px;height:20px;background:#5f5f5f;border-radius:3px;"></div>
<div style="left:214px;top:955px;width:15px;height:14px;background:#969696;border-radius:3.500px;"></div>
<div style="left:791px;top:955px;width:15px;height:14px;background:#969696;border-radius:3.500px;"></div>
<span style="top:956.00px;font-size:11px;line-height:14px;color:#e4e4e4;white-space:pre;left:232.5px;">1</span>
<span style="top:956.00px;font-size:11px;line-height:14px;color:#e4e4e4;white-space:pre;letter-spacing:0.047px;left:768.5px;">120</span>
<svg style="left:1392.5px;top:952px;" width="5" height="20" viewBox="0 0 5 20"><rect x="2" y="0" width="1" height="20" fill="#6a6a6a"/><rect x="1" y="4" width="3" height="11" rx="1" fill="#7a7a7a"/></svg>
<svg style="left:1409px;top:959px;" width="10" height="6" viewBox="0 0 10 6"><path d="M0.500 0.500h9l-4.500 5z" fill="#6a6a6a" stroke="#9a9a9a" stroke-width=".800"/></svg>
<div style="left:1426px;top:951px;width:101.5px;height:23px;background:#474747;border:1px solid #3a3a3a;border-radius:3px;"></div>
<span style="top:955.00px;font-size:12px;line-height:16px;color:#d2d2d2;white-space:pre;letter-spacing:-0.420px;left:1432px;">No Character Set</span>
<svg style="left:1538px;top:959px;" width="10" height="6" viewBox="0 0 10 6"><path d="M0.500 0.500h9l-4.500 5z" fill="#6a6a6a" stroke="#9a9a9a" stroke-width=".800"/></svg>
<div style="left:1555px;top:951px;width:101.5px;height:23px;background:#474747;border:1px solid #3a3a3a;border-radius:3px;"></div>
<span style="top:955.00px;font-size:12px;line-height:16px;color:#d2d2d2;white-space:pre;letter-spacing:-0.400px;left:1561px;">No Anim Layer</span>
<svg style="left:1665px;top:952px;" width="5" height="20" viewBox="0 0 5 20"><rect x="2" y="0" width="1" height="20" fill="#6a6a6a"/><rect x="1" y="4" width="3" height="11" rx="1" fill="#7a7a7a"/></svg>
<div style="left:1681px;top:953px;width:95px;height:19px;background:#5d5d5d;border-radius:2px;"></div>
<div style="left:1755px;top:953px;width:1px;height:19px;background:#4c4c4c;"></div>
<span style="top:956.00px;font-size:12px;line-height:16px;color:#d2d2d2;white-space:pre;letter-spacing:-0.284px;left:1684px;">24 fps</span>
<svg style="left:1761px;top:960px;" width="10" height="6" viewBox="0 0 10 6"><path d="M0 0h10l-5 5.500z" fill="#d0d0d0"/></svg>
<svg style="left:1788px;top:953px;" width="19" height="16" viewBox="0 0 19 16"><path d="M4 8V6.500a3 3 0 0 1 3-3h8M15 8v1.500a3 3 0 0 1-3 3H4" stroke="#d0d0d0" stroke-width="1.800" fill="none"/><path d="M13.500 0l4 3.500-4 3.500zM5.500 9l-4 3.500 4 3.500z" fill="#d0d0d0"/></svg>
<div style="left:1816px;top:951px;width:22.5px;height:22.5px;background:#5285a6;"></div>
<svg style="left:1818px;top:953px;" width="19" height="19" viewBox="0 0 19 19"><rect x="0.500" y="4.500" width="17" height="12" fill="#e8e8e8" stroke="#444" stroke-width=".800"/><rect x="2.500" y="7" width="13" height="7" fill="#e5853a"/><path d="M2 5.500h15M2 15.500h15" stroke="#444" stroke-width="1.200" stroke-dasharray="1.500 1.500"/><path d="M12 0h6v6" fill="#e8e8e8"/></svg>
<svg style="left:1847px;top:952px;" width="5" height="20" viewBox="0 0 5 20"><rect x="2" y="0" width="1" height="20" fill="#6a6a6a"/><rect x="1" y="4" width="3" height="11" rx="1" fill="#7a7a7a"/></svg>
<svg style="left:1862px;top:953px;" width="19" height="19" viewBox="0 0 19 19"><circle cx="9" cy="10" r="7.500" fill="none" stroke="#d0d0d0" stroke-width="1.500"/><path d="M9 5v5h3" stroke="#d0d0d0" stroke-width="1.500" fill="none"/><path d="M12 12h6M15 9v7" stroke="#e5853a" stroke-width="2"/><path d="M0 3l3-3 1.500 4z" fill="#d0d0d0"/></svg>
<svg style="left:1890px;top:952px;" width="19" height="20" viewBox="0 0 19 20"><circle cx="4.500" cy="4.500" r="3" fill="none" stroke="#d0d0d0" stroke-width="1.500"/><path d="M4.500 0v9M0 4.500h9" stroke="#d0d0d0" stroke-width="1"/><circle cx="13" cy="4.500" r="2" fill="#e5853a"/><path d="M8 9l4-1.500 3 3.500 3 1M12 8l-1 6-4 4M11 14l4 2v4" stroke="#e5853a" stroke-width="1.800" fill="none"/></svg>
<span style="top:991.00px;font-size:11px;line-height:14px;color:#e8e8e8;white-space:pre;letter-spacing:-0.708px;left:24.5px;">MEL</span>
<div style="left:59px;top:987px;width:664px;height:21.5px;background:#2b2b2b;border-radius:3px;"></div>
<svg style="left:726px;top:990px;" width="2" height="15" viewBox="0 0 2 15"><rect x="0" y="0" width="1" height="1" fill="#7a7a7a"/><rect x="0" y="2" width="1" height="1" fill="#7a7a7a"/><rect x="0" y="4" width="1" height="1" fill="#7a7a7a"/><rect x="0" y="6" width="1" height="1" fill="#7a7a7a"/><rect x="0" y="8" width="1" height="1" fill="#7a7a7a"/><rect x="0" y="10" width="1" height="1" fill="#7a7a7a"/><rect x="0" y="12" width="1" height="1" fill="#7a7a7a"/><rect x="0" y="14" width="1" height="1" fill="#7a7a7a"/></svg>
<div style="left:731px;top:987px;width:1155.5px;height:21.5px;background:#2b2b2b;border-radius:3px;"></div>
<svg style="left:1893px;top:988px;" width="18" height="19" viewBox="0 0 18 19"><rect x="0.500" y="0.500" width="17" height="18" fill="#d0d0d0"/><rect x="1.500" y="3.500" width="15" height="14" fill="#444"/><rect x="2" y="1.500" width="14" height="1" fill="#444"/></svg>
<span style="top:994.00px;font-size:9px;line-height:12px;color:#e0e0e0;white-space:pre;font-weight:bold;letter-spacing:0.661px;left:1896px;">{;}</span>
<span style="top:1022.00px;font-size:10px;line-height:13px;color:#cfcfcf;white-space:pre;letter-spacing:0.009px;left:24.5px;">Move Tool: Use manipulator to move object(s). Ctrl+MMB+drag to move components along normals. Shift+drag manipulator axis or plane handles to extrude components or clone objects. Ctrl+Shift+LMB+drag to constrain movement to a connected edge. Use D or INSERT to change the pivot position and axis orientation.</span>
</body></html>
